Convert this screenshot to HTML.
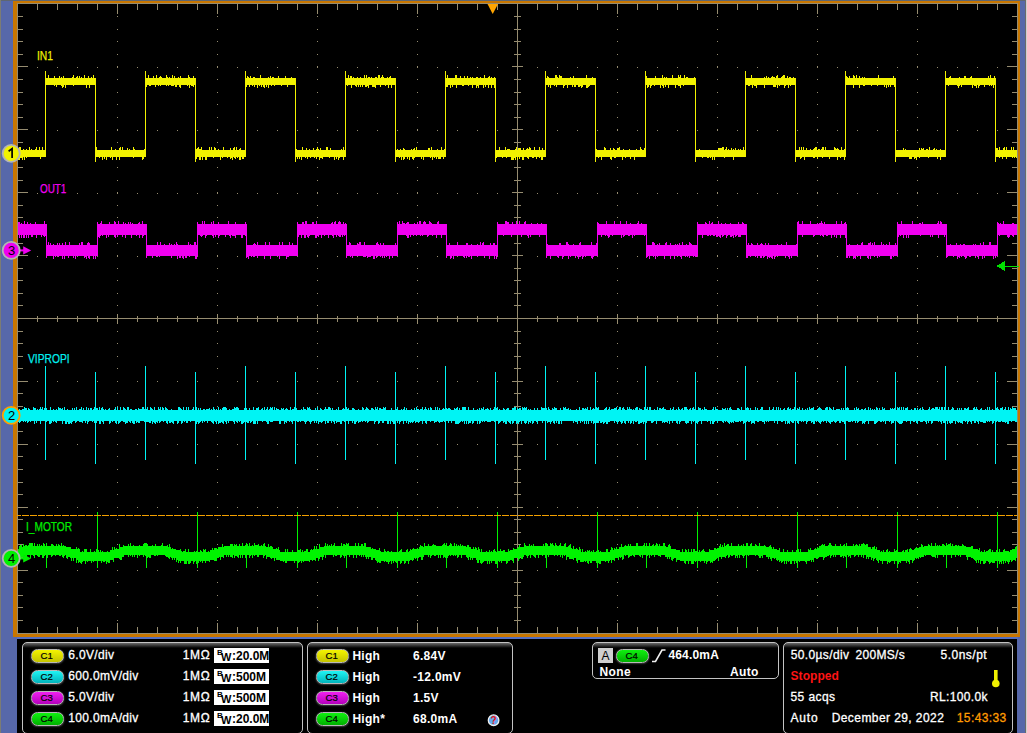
<!DOCTYPE html>
<html><head><meta charset="utf-8"><style>
html,body{margin:0;padding:0;}
body{width:1027px;height:733px;overflow:hidden;position:relative;background:#000;font-family:"Liberation Sans",sans-serif;}
svg{position:absolute;left:0;top:0;}

.lbl{position:absolute;font-size:13px;line-height:13px;transform-origin:0 0;transform:scaleX(0.76);white-space:nowrap;-webkit-text-stroke:0.25px currentColor;}
.t{position:absolute;white-space:nowrap;color:#fff;font-size:12px;line-height:12px;}
.b{font-weight:bold;}
.panel{position:absolute;border:1px solid #c4c4c4;border-radius:5px;box-sizing:border-box;background:linear-gradient(#6a6a6a 0,#2a2a2a 3px,#000 5px,#000);}
.pill{position:absolute;width:31px;height:12px;border-radius:6.5px;border:1px solid #b8b8b8;box-shadow:0 0.5px 1.5px 0.5px #3a3a3a;font-size:9.6px;line-height:11.5px;text-align:center;color:#000;text-indent:-1.5px;-webkit-text-stroke:0.2px #000;}
.bw{position:absolute;background:#fff;color:#000;width:55px;height:15px;font-size:12px;}
.bb{position:absolute;left:3px;top:0px;font-size:8px;line-height:9px;font-weight:bold}
.bwl{position:absolute;left:7px;top:4px;font-size:11px;line-height:11px;font-weight:bold}
.bv{position:absolute;left:18px;top:1px;line-height:14px;font-weight:bold}
svg.i{}
</style></head><body>
<svg width="1027" height="733" viewBox="0 0 1027 733" shape-rendering="crispEdges">
<rect x="0" y="0" width="1027" height="733" fill="#5768aa"/>
<rect x="0" y="0" width="1027" height="1" fill="#5e6672"/>
<rect x="0" y="0" width="1" height="733" fill="#7c7c74"/>
<rect x="1025" y="0" width="1" height="733" fill="#6a6a6a"/><rect x="1026" y="0" width="1" height="733" fill="#d0d0d0"/>
<rect x="13" y="1" width="1007" height="636" fill="#c87600"/>
<rect x="17" y="3" width="1001" height="631" fill="#000"/>
<rect x="17" y="639" width="1000" height="94" fill="#000"/>
<rect x="17" y="637" width="1001" height="2" fill="#5670c0"/>
<path d="M17.5 3V634M1017.5 3V634M17 3.5H1018M17 633.5H1018M37.5 4v6M37.5 633v-6M57.5 4v6M57.5 633v-6M77.5 4v6M77.5 633v-6M97.5 4v6M97.5 633v-6M117.5 4v10M117.5 633v-10M137.5 4v6M137.5 633v-6M157.5 4v6M157.5 633v-6M177.5 4v6M177.5 633v-6M197.5 4v6M197.5 633v-6M217.5 4v10M217.5 633v-10M237.5 4v6M237.5 633v-6M257.5 4v6M257.5 633v-6M277.5 4v6M277.5 633v-6M297.5 4v6M297.5 633v-6M317.5 4v10M317.5 633v-10M337.5 4v6M337.5 633v-6M357.5 4v6M357.5 633v-6M377.5 4v6M377.5 633v-6M397.5 4v6M397.5 633v-6M417.5 4v10M417.5 633v-10M437.5 4v6M437.5 633v-6M457.5 4v6M457.5 633v-6M477.5 4v6M477.5 633v-6M497.5 4v6M497.5 633v-6M517.5 4v10M517.5 633v-10M537.5 4v6M537.5 633v-6M557.5 4v6M557.5 633v-6M577.5 4v6M577.5 633v-6M597.5 4v6M597.5 633v-6M617.5 4v10M617.5 633v-10M637.5 4v6M637.5 633v-6M657.5 4v6M657.5 633v-6M677.5 4v6M677.5 633v-6M697.5 4v6M697.5 633v-6M717.5 4v10M717.5 633v-10M737.5 4v6M737.5 633v-6M757.5 4v6M757.5 633v-6M777.5 4v6M777.5 633v-6M797.5 4v6M797.5 633v-6M817.5 4v10M817.5 633v-10M837.5 4v6M837.5 633v-6M857.5 4v6M857.5 633v-6M877.5 4v6M877.5 633v-6M897.5 4v6M897.5 633v-6M917.5 4v10M917.5 633v-10M937.5 4v6M937.5 633v-6M957.5 4v6M957.5 633v-6M977.5 4v6M977.5 633v-6M997.5 4v6M997.5 633v-6M17 16.5h6M1018 16.5h-6M17 29.5h6M1018 29.5h-6M17 41.5h6M1018 41.5h-6M17 54.5h6M1018 54.5h-6M17 66.5h11M1018 66.5h-11M17 79.5h6M1018 79.5h-6M17 92.5h6M1018 92.5h-6M17 104.5h6M1018 104.5h-6M17 117.5h6M1018 117.5h-6M17 129.5h11M1018 129.5h-11M17 142.5h6M1018 142.5h-6M17 154.5h6M1018 154.5h-6M17 167.5h6M1018 167.5h-6M17 180.5h6M1018 180.5h-6M17 192.5h11M1018 192.5h-11M17 205.5h6M1018 205.5h-6M17 217.5h6M1018 217.5h-6M17 230.5h6M1018 230.5h-6M17 243.5h6M1018 243.5h-6M17 255.5h11M1018 255.5h-11M17 268.5h6M1018 268.5h-6M17 280.5h6M1018 280.5h-6M17 293.5h6M1018 293.5h-6M17 305.5h6M1018 305.5h-6M17 318.5h11M1018 318.5h-11M17 331.5h6M1018 331.5h-6M17 343.5h6M1018 343.5h-6M17 356.5h6M1018 356.5h-6M17 368.5h6M1018 368.5h-6M17 381.5h11M1018 381.5h-11M17 393.5h6M1018 393.5h-6M17 406.5h6M1018 406.5h-6M17 419.5h6M1018 419.5h-6M17 431.5h6M1018 431.5h-6M17 444.5h11M1018 444.5h-11M17 456.5h6M1018 456.5h-6M17 469.5h6M1018 469.5h-6M17 482.5h6M1018 482.5h-6M17 494.5h6M1018 494.5h-6M17 507.5h11M1018 507.5h-11M17 519.5h6M1018 519.5h-6M17 532.5h6M1018 532.5h-6M17 544.5h6M1018 544.5h-6M17 557.5h6M1018 557.5h-6M17 570.5h11M1018 570.5h-11M17 582.5h6M1018 582.5h-6M17 595.5h6M1018 595.5h-6M17 607.5h6M1018 607.5h-6M17 620.5h6M1018 620.5h-6M517.5 4V633M17 318.5H1017M37.5 315.5v6M57.5 315.5v6M77.5 315.5v6M97.5 315.5v6M117.5 313.5v10M137.5 315.5v6M157.5 315.5v6M177.5 315.5v6M197.5 315.5v6M217.5 313.5v10M237.5 315.5v6M257.5 315.5v6M277.5 315.5v6M297.5 315.5v6M317.5 313.5v10M337.5 315.5v6M357.5 315.5v6M377.5 315.5v6M397.5 315.5v6M417.5 313.5v10M437.5 315.5v6M457.5 315.5v6M477.5 315.5v6M497.5 315.5v6M517.5 313.5v10M537.5 315.5v6M557.5 315.5v6M577.5 315.5v6M597.5 315.5v6M617.5 313.5v10M637.5 315.5v6M657.5 315.5v6M677.5 315.5v6M697.5 315.5v6M717.5 313.5v10M737.5 315.5v6M757.5 315.5v6M777.5 315.5v6M797.5 315.5v6M817.5 313.5v10M837.5 315.5v6M857.5 315.5v6M877.5 315.5v6M897.5 315.5v6M917.5 313.5v10M937.5 315.5v6M957.5 315.5v6M977.5 315.5v6M997.5 315.5v6M514 16.5h7M514 29.5h7M514 41.5h7M514 54.5h7M512 66.5h11M514 79.5h7M514 92.5h7M514 104.5h7M514 117.5h7M512 129.5h11M514 142.5h7M514 154.5h7M514 167.5h7M514 180.5h7M512 192.5h11M514 205.5h7M514 217.5h7M514 230.5h7M514 243.5h7M512 255.5h11M514 268.5h7M514 280.5h7M514 293.5h7M514 305.5h7M512 318.5h11M514 331.5h7M514 343.5h7M514 356.5h7M514 368.5h7M512 381.5h11M514 393.5h7M514 406.5h7M514 419.5h7M514 431.5h7M512 444.5h11M514 456.5h7M514 469.5h7M514 482.5h7M514 494.5h7M512 507.5h11M514 519.5h7M514 532.5h7M514 544.5h7M514 557.5h7M512 570.5h11M514 582.5h7M514 595.5h7M514 607.5h7M514 620.5h7" stroke="#968c70" stroke-width="1" fill="none"/>
<path d="M117 16h1v1h-1zM117 29h1v1h-1zM117 41h1v1h-1zM117 54h1v1h-1zM117 66h1v1h-1zM117 79h1v1h-1zM117 92h1v1h-1zM117 104h1v1h-1zM117 117h1v1h-1zM117 129h1v1h-1zM117 142h1v1h-1zM117 154h1v1h-1zM117 167h1v1h-1zM117 180h1v1h-1zM117 192h1v1h-1zM117 205h1v1h-1zM117 217h1v1h-1zM117 230h1v1h-1zM117 243h1v1h-1zM117 255h1v1h-1zM117 268h1v1h-1zM117 280h1v1h-1zM117 293h1v1h-1zM117 305h1v1h-1zM117 318h1v1h-1zM117 331h1v1h-1zM117 343h1v1h-1zM117 356h1v1h-1zM117 368h1v1h-1zM117 381h1v1h-1zM117 393h1v1h-1zM117 406h1v1h-1zM117 419h1v1h-1zM117 431h1v1h-1zM117 444h1v1h-1zM117 456h1v1h-1zM117 469h1v1h-1zM117 482h1v1h-1zM117 494h1v1h-1zM117 507h1v1h-1zM117 519h1v1h-1zM117 532h1v1h-1zM117 544h1v1h-1zM117 557h1v1h-1zM117 570h1v1h-1zM117 582h1v1h-1zM117 595h1v1h-1zM117 607h1v1h-1zM117 620h1v1h-1zM217 16h1v1h-1zM217 29h1v1h-1zM217 41h1v1h-1zM217 54h1v1h-1zM217 66h1v1h-1zM217 79h1v1h-1zM217 92h1v1h-1zM217 104h1v1h-1zM217 117h1v1h-1zM217 129h1v1h-1zM217 142h1v1h-1zM217 154h1v1h-1zM217 167h1v1h-1zM217 180h1v1h-1zM217 192h1v1h-1zM217 205h1v1h-1zM217 217h1v1h-1zM217 230h1v1h-1zM217 243h1v1h-1zM217 255h1v1h-1zM217 268h1v1h-1zM217 280h1v1h-1zM217 293h1v1h-1zM217 305h1v1h-1zM217 318h1v1h-1zM217 331h1v1h-1zM217 343h1v1h-1zM217 356h1v1h-1zM217 368h1v1h-1zM217 381h1v1h-1zM217 393h1v1h-1zM217 406h1v1h-1zM217 419h1v1h-1zM217 431h1v1h-1zM217 444h1v1h-1zM217 456h1v1h-1zM217 469h1v1h-1zM217 482h1v1h-1zM217 494h1v1h-1zM217 507h1v1h-1zM217 519h1v1h-1zM217 532h1v1h-1zM217 544h1v1h-1zM217 557h1v1h-1zM217 570h1v1h-1zM217 582h1v1h-1zM217 595h1v1h-1zM217 607h1v1h-1zM217 620h1v1h-1zM317 16h1v1h-1zM317 29h1v1h-1zM317 41h1v1h-1zM317 54h1v1h-1zM317 66h1v1h-1zM317 79h1v1h-1zM317 92h1v1h-1zM317 104h1v1h-1zM317 117h1v1h-1zM317 129h1v1h-1zM317 142h1v1h-1zM317 154h1v1h-1zM317 167h1v1h-1zM317 180h1v1h-1zM317 192h1v1h-1zM317 205h1v1h-1zM317 217h1v1h-1zM317 230h1v1h-1zM317 243h1v1h-1zM317 255h1v1h-1zM317 268h1v1h-1zM317 280h1v1h-1zM317 293h1v1h-1zM317 305h1v1h-1zM317 318h1v1h-1zM317 331h1v1h-1zM317 343h1v1h-1zM317 356h1v1h-1zM317 368h1v1h-1zM317 381h1v1h-1zM317 393h1v1h-1zM317 406h1v1h-1zM317 419h1v1h-1zM317 431h1v1h-1zM317 444h1v1h-1zM317 456h1v1h-1zM317 469h1v1h-1zM317 482h1v1h-1zM317 494h1v1h-1zM317 507h1v1h-1zM317 519h1v1h-1zM317 532h1v1h-1zM317 544h1v1h-1zM317 557h1v1h-1zM317 570h1v1h-1zM317 582h1v1h-1zM317 595h1v1h-1zM317 607h1v1h-1zM317 620h1v1h-1zM417 16h1v1h-1zM417 29h1v1h-1zM417 41h1v1h-1zM417 54h1v1h-1zM417 66h1v1h-1zM417 79h1v1h-1zM417 92h1v1h-1zM417 104h1v1h-1zM417 117h1v1h-1zM417 129h1v1h-1zM417 142h1v1h-1zM417 154h1v1h-1zM417 167h1v1h-1zM417 180h1v1h-1zM417 192h1v1h-1zM417 205h1v1h-1zM417 217h1v1h-1zM417 230h1v1h-1zM417 243h1v1h-1zM417 255h1v1h-1zM417 268h1v1h-1zM417 280h1v1h-1zM417 293h1v1h-1zM417 305h1v1h-1zM417 318h1v1h-1zM417 331h1v1h-1zM417 343h1v1h-1zM417 356h1v1h-1zM417 368h1v1h-1zM417 381h1v1h-1zM417 393h1v1h-1zM417 406h1v1h-1zM417 419h1v1h-1zM417 431h1v1h-1zM417 444h1v1h-1zM417 456h1v1h-1zM417 469h1v1h-1zM417 482h1v1h-1zM417 494h1v1h-1zM417 507h1v1h-1zM417 519h1v1h-1zM417 532h1v1h-1zM417 544h1v1h-1zM417 557h1v1h-1zM417 570h1v1h-1zM417 582h1v1h-1zM417 595h1v1h-1zM417 607h1v1h-1zM417 620h1v1h-1zM617 16h1v1h-1zM617 29h1v1h-1zM617 41h1v1h-1zM617 54h1v1h-1zM617 66h1v1h-1zM617 79h1v1h-1zM617 92h1v1h-1zM617 104h1v1h-1zM617 117h1v1h-1zM617 129h1v1h-1zM617 142h1v1h-1zM617 154h1v1h-1zM617 167h1v1h-1zM617 180h1v1h-1zM617 192h1v1h-1zM617 205h1v1h-1zM617 217h1v1h-1zM617 230h1v1h-1zM617 243h1v1h-1zM617 255h1v1h-1zM617 268h1v1h-1zM617 280h1v1h-1zM617 293h1v1h-1zM617 305h1v1h-1zM617 318h1v1h-1zM617 331h1v1h-1zM617 343h1v1h-1zM617 356h1v1h-1zM617 368h1v1h-1zM617 381h1v1h-1zM617 393h1v1h-1zM617 406h1v1h-1zM617 419h1v1h-1zM617 431h1v1h-1zM617 444h1v1h-1zM617 456h1v1h-1zM617 469h1v1h-1zM617 482h1v1h-1zM617 494h1v1h-1zM617 507h1v1h-1zM617 519h1v1h-1zM617 532h1v1h-1zM617 544h1v1h-1zM617 557h1v1h-1zM617 570h1v1h-1zM617 582h1v1h-1zM617 595h1v1h-1zM617 607h1v1h-1zM617 620h1v1h-1zM717 16h1v1h-1zM717 29h1v1h-1zM717 41h1v1h-1zM717 54h1v1h-1zM717 66h1v1h-1zM717 79h1v1h-1zM717 92h1v1h-1zM717 104h1v1h-1zM717 117h1v1h-1zM717 129h1v1h-1zM717 142h1v1h-1zM717 154h1v1h-1zM717 167h1v1h-1zM717 180h1v1h-1zM717 192h1v1h-1zM717 205h1v1h-1zM717 217h1v1h-1zM717 230h1v1h-1zM717 243h1v1h-1zM717 255h1v1h-1zM717 268h1v1h-1zM717 280h1v1h-1zM717 293h1v1h-1zM717 305h1v1h-1zM717 318h1v1h-1zM717 331h1v1h-1zM717 343h1v1h-1zM717 356h1v1h-1zM717 368h1v1h-1zM717 381h1v1h-1zM717 393h1v1h-1zM717 406h1v1h-1zM717 419h1v1h-1zM717 431h1v1h-1zM717 444h1v1h-1zM717 456h1v1h-1zM717 469h1v1h-1zM717 482h1v1h-1zM717 494h1v1h-1zM717 507h1v1h-1zM717 519h1v1h-1zM717 532h1v1h-1zM717 544h1v1h-1zM717 557h1v1h-1zM717 570h1v1h-1zM717 582h1v1h-1zM717 595h1v1h-1zM717 607h1v1h-1zM717 620h1v1h-1zM817 16h1v1h-1zM817 29h1v1h-1zM817 41h1v1h-1zM817 54h1v1h-1zM817 66h1v1h-1zM817 79h1v1h-1zM817 92h1v1h-1zM817 104h1v1h-1zM817 117h1v1h-1zM817 129h1v1h-1zM817 142h1v1h-1zM817 154h1v1h-1zM817 167h1v1h-1zM817 180h1v1h-1zM817 192h1v1h-1zM817 205h1v1h-1zM817 217h1v1h-1zM817 230h1v1h-1zM817 243h1v1h-1zM817 255h1v1h-1zM817 268h1v1h-1zM817 280h1v1h-1zM817 293h1v1h-1zM817 305h1v1h-1zM817 318h1v1h-1zM817 331h1v1h-1zM817 343h1v1h-1zM817 356h1v1h-1zM817 368h1v1h-1zM817 381h1v1h-1zM817 393h1v1h-1zM817 406h1v1h-1zM817 419h1v1h-1zM817 431h1v1h-1zM817 444h1v1h-1zM817 456h1v1h-1zM817 469h1v1h-1zM817 482h1v1h-1zM817 494h1v1h-1zM817 507h1v1h-1zM817 519h1v1h-1zM817 532h1v1h-1zM817 544h1v1h-1zM817 557h1v1h-1zM817 570h1v1h-1zM817 582h1v1h-1zM817 595h1v1h-1zM817 607h1v1h-1zM817 620h1v1h-1zM917 16h1v1h-1zM917 29h1v1h-1zM917 41h1v1h-1zM917 54h1v1h-1zM917 66h1v1h-1zM917 79h1v1h-1zM917 92h1v1h-1zM917 104h1v1h-1zM917 117h1v1h-1zM917 129h1v1h-1zM917 142h1v1h-1zM917 154h1v1h-1zM917 167h1v1h-1zM917 180h1v1h-1zM917 192h1v1h-1zM917 205h1v1h-1zM917 217h1v1h-1zM917 230h1v1h-1zM917 243h1v1h-1zM917 255h1v1h-1zM917 268h1v1h-1zM917 280h1v1h-1zM917 293h1v1h-1zM917 305h1v1h-1zM917 318h1v1h-1zM917 331h1v1h-1zM917 343h1v1h-1zM917 356h1v1h-1zM917 368h1v1h-1zM917 381h1v1h-1zM917 393h1v1h-1zM917 406h1v1h-1zM917 419h1v1h-1zM917 431h1v1h-1zM917 444h1v1h-1zM917 456h1v1h-1zM917 469h1v1h-1zM917 482h1v1h-1zM917 494h1v1h-1zM917 507h1v1h-1zM917 519h1v1h-1zM917 532h1v1h-1zM917 544h1v1h-1zM917 557h1v1h-1zM917 570h1v1h-1zM917 582h1v1h-1zM917 595h1v1h-1zM917 607h1v1h-1zM917 620h1v1h-1zM37 67h1v1h-1zM57 67h1v1h-1zM77 67h1v1h-1zM97 67h1v1h-1zM117 67h1v1h-1zM137 67h1v1h-1zM157 67h1v1h-1zM177 67h1v1h-1zM197 67h1v1h-1zM217 67h1v1h-1zM237 67h1v1h-1zM257 67h1v1h-1zM277 67h1v1h-1zM297 67h1v1h-1zM317 67h1v1h-1zM337 67h1v1h-1zM357 67h1v1h-1zM377 67h1v1h-1zM397 67h1v1h-1zM417 67h1v1h-1zM437 67h1v1h-1zM457 67h1v1h-1zM477 67h1v1h-1zM497 67h1v1h-1zM517 67h1v1h-1zM537 67h1v1h-1zM557 67h1v1h-1zM577 67h1v1h-1zM597 67h1v1h-1zM617 67h1v1h-1zM637 67h1v1h-1zM657 67h1v1h-1zM677 67h1v1h-1zM697 67h1v1h-1zM717 67h1v1h-1zM737 67h1v1h-1zM757 67h1v1h-1zM777 67h1v1h-1zM797 67h1v1h-1zM817 67h1v1h-1zM837 67h1v1h-1zM857 67h1v1h-1zM877 67h1v1h-1zM897 67h1v1h-1zM917 67h1v1h-1zM937 67h1v1h-1zM957 67h1v1h-1zM977 67h1v1h-1zM997 67h1v1h-1zM37 130h1v1h-1zM57 130h1v1h-1zM77 130h1v1h-1zM97 130h1v1h-1zM117 130h1v1h-1zM137 130h1v1h-1zM157 130h1v1h-1zM177 130h1v1h-1zM197 130h1v1h-1zM217 130h1v1h-1zM237 130h1v1h-1zM257 130h1v1h-1zM277 130h1v1h-1zM297 130h1v1h-1zM317 130h1v1h-1zM337 130h1v1h-1zM357 130h1v1h-1zM377 130h1v1h-1zM397 130h1v1h-1zM417 130h1v1h-1zM437 130h1v1h-1zM457 130h1v1h-1zM477 130h1v1h-1zM497 130h1v1h-1zM517 130h1v1h-1zM537 130h1v1h-1zM557 130h1v1h-1zM577 130h1v1h-1zM597 130h1v1h-1zM617 130h1v1h-1zM637 130h1v1h-1zM657 130h1v1h-1zM677 130h1v1h-1zM697 130h1v1h-1zM717 130h1v1h-1zM737 130h1v1h-1zM757 130h1v1h-1zM777 130h1v1h-1zM797 130h1v1h-1zM817 130h1v1h-1zM837 130h1v1h-1zM857 130h1v1h-1zM877 130h1v1h-1zM897 130h1v1h-1zM917 130h1v1h-1zM937 130h1v1h-1zM957 130h1v1h-1zM977 130h1v1h-1zM997 130h1v1h-1zM37 193h1v1h-1zM57 193h1v1h-1zM77 193h1v1h-1zM97 193h1v1h-1zM117 193h1v1h-1zM137 193h1v1h-1zM157 193h1v1h-1zM177 193h1v1h-1zM197 193h1v1h-1zM217 193h1v1h-1zM237 193h1v1h-1zM257 193h1v1h-1zM277 193h1v1h-1zM297 193h1v1h-1zM317 193h1v1h-1zM337 193h1v1h-1zM357 193h1v1h-1zM377 193h1v1h-1zM397 193h1v1h-1zM417 193h1v1h-1zM437 193h1v1h-1zM457 193h1v1h-1zM477 193h1v1h-1zM497 193h1v1h-1zM517 193h1v1h-1zM537 193h1v1h-1zM557 193h1v1h-1zM577 193h1v1h-1zM597 193h1v1h-1zM617 193h1v1h-1zM637 193h1v1h-1zM657 193h1v1h-1zM677 193h1v1h-1zM697 193h1v1h-1zM717 193h1v1h-1zM737 193h1v1h-1zM757 193h1v1h-1zM777 193h1v1h-1zM797 193h1v1h-1zM817 193h1v1h-1zM837 193h1v1h-1zM857 193h1v1h-1zM877 193h1v1h-1zM897 193h1v1h-1zM917 193h1v1h-1zM937 193h1v1h-1zM957 193h1v1h-1zM977 193h1v1h-1zM997 193h1v1h-1zM37 256h1v1h-1zM57 256h1v1h-1zM77 256h1v1h-1zM97 256h1v1h-1zM117 256h1v1h-1zM137 256h1v1h-1zM157 256h1v1h-1zM177 256h1v1h-1zM197 256h1v1h-1zM217 256h1v1h-1zM237 256h1v1h-1zM257 256h1v1h-1zM277 256h1v1h-1zM297 256h1v1h-1zM317 256h1v1h-1zM337 256h1v1h-1zM357 256h1v1h-1zM377 256h1v1h-1zM397 256h1v1h-1zM417 256h1v1h-1zM437 256h1v1h-1zM457 256h1v1h-1zM477 256h1v1h-1zM497 256h1v1h-1zM517 256h1v1h-1zM537 256h1v1h-1zM557 256h1v1h-1zM577 256h1v1h-1zM597 256h1v1h-1zM617 256h1v1h-1zM637 256h1v1h-1zM657 256h1v1h-1zM677 256h1v1h-1zM697 256h1v1h-1zM717 256h1v1h-1zM737 256h1v1h-1zM757 256h1v1h-1zM777 256h1v1h-1zM797 256h1v1h-1zM817 256h1v1h-1zM837 256h1v1h-1zM857 256h1v1h-1zM877 256h1v1h-1zM897 256h1v1h-1zM917 256h1v1h-1zM937 256h1v1h-1zM957 256h1v1h-1zM977 256h1v1h-1zM997 256h1v1h-1zM37 381h1v1h-1zM57 381h1v1h-1zM77 381h1v1h-1zM97 381h1v1h-1zM117 381h1v1h-1zM137 381h1v1h-1zM157 381h1v1h-1zM177 381h1v1h-1zM197 381h1v1h-1zM217 381h1v1h-1zM237 381h1v1h-1zM257 381h1v1h-1zM277 381h1v1h-1zM297 381h1v1h-1zM317 381h1v1h-1zM337 381h1v1h-1zM357 381h1v1h-1zM377 381h1v1h-1zM397 381h1v1h-1zM417 381h1v1h-1zM437 381h1v1h-1zM457 381h1v1h-1zM477 381h1v1h-1zM497 381h1v1h-1zM517 381h1v1h-1zM537 381h1v1h-1zM557 381h1v1h-1zM577 381h1v1h-1zM597 381h1v1h-1zM617 381h1v1h-1zM637 381h1v1h-1zM657 381h1v1h-1zM677 381h1v1h-1zM697 381h1v1h-1zM717 381h1v1h-1zM737 381h1v1h-1zM757 381h1v1h-1zM777 381h1v1h-1zM797 381h1v1h-1zM817 381h1v1h-1zM837 381h1v1h-1zM857 381h1v1h-1zM877 381h1v1h-1zM897 381h1v1h-1zM917 381h1v1h-1zM937 381h1v1h-1zM957 381h1v1h-1zM977 381h1v1h-1zM997 381h1v1h-1zM37 444h1v1h-1zM57 444h1v1h-1zM77 444h1v1h-1zM97 444h1v1h-1zM117 444h1v1h-1zM137 444h1v1h-1zM157 444h1v1h-1zM177 444h1v1h-1zM197 444h1v1h-1zM217 444h1v1h-1zM237 444h1v1h-1zM257 444h1v1h-1zM277 444h1v1h-1zM297 444h1v1h-1zM317 444h1v1h-1zM337 444h1v1h-1zM357 444h1v1h-1zM377 444h1v1h-1zM397 444h1v1h-1zM417 444h1v1h-1zM437 444h1v1h-1zM457 444h1v1h-1zM477 444h1v1h-1zM497 444h1v1h-1zM517 444h1v1h-1zM537 444h1v1h-1zM557 444h1v1h-1zM577 444h1v1h-1zM597 444h1v1h-1zM617 444h1v1h-1zM637 444h1v1h-1zM657 444h1v1h-1zM677 444h1v1h-1zM697 444h1v1h-1zM717 444h1v1h-1zM737 444h1v1h-1zM757 444h1v1h-1zM777 444h1v1h-1zM797 444h1v1h-1zM817 444h1v1h-1zM837 444h1v1h-1zM857 444h1v1h-1zM877 444h1v1h-1zM897 444h1v1h-1zM917 444h1v1h-1zM937 444h1v1h-1zM957 444h1v1h-1zM977 444h1v1h-1zM997 444h1v1h-1zM37 507h1v1h-1zM57 507h1v1h-1zM77 507h1v1h-1zM97 507h1v1h-1zM117 507h1v1h-1zM137 507h1v1h-1zM157 507h1v1h-1zM177 507h1v1h-1zM197 507h1v1h-1zM217 507h1v1h-1zM237 507h1v1h-1zM257 507h1v1h-1zM277 507h1v1h-1zM297 507h1v1h-1zM317 507h1v1h-1zM337 507h1v1h-1zM357 507h1v1h-1zM377 507h1v1h-1zM397 507h1v1h-1zM417 507h1v1h-1zM437 507h1v1h-1zM457 507h1v1h-1zM477 507h1v1h-1zM497 507h1v1h-1zM517 507h1v1h-1zM537 507h1v1h-1zM557 507h1v1h-1zM577 507h1v1h-1zM597 507h1v1h-1zM617 507h1v1h-1zM637 507h1v1h-1zM657 507h1v1h-1zM677 507h1v1h-1zM697 507h1v1h-1zM717 507h1v1h-1zM737 507h1v1h-1zM757 507h1v1h-1zM777 507h1v1h-1zM797 507h1v1h-1zM817 507h1v1h-1zM837 507h1v1h-1zM857 507h1v1h-1zM877 507h1v1h-1zM897 507h1v1h-1zM917 507h1v1h-1zM937 507h1v1h-1zM957 507h1v1h-1zM977 507h1v1h-1zM997 507h1v1h-1zM37 570h1v1h-1zM57 570h1v1h-1zM77 570h1v1h-1zM97 570h1v1h-1zM117 570h1v1h-1zM137 570h1v1h-1zM157 570h1v1h-1zM177 570h1v1h-1zM197 570h1v1h-1zM217 570h1v1h-1zM237 570h1v1h-1zM257 570h1v1h-1zM277 570h1v1h-1zM297 570h1v1h-1zM317 570h1v1h-1zM337 570h1v1h-1zM357 570h1v1h-1zM377 570h1v1h-1zM397 570h1v1h-1zM417 570h1v1h-1zM437 570h1v1h-1zM457 570h1v1h-1zM477 570h1v1h-1zM497 570h1v1h-1zM517 570h1v1h-1zM537 570h1v1h-1zM557 570h1v1h-1zM577 570h1v1h-1zM597 570h1v1h-1zM617 570h1v1h-1zM637 570h1v1h-1zM657 570h1v1h-1zM677 570h1v1h-1zM697 570h1v1h-1zM717 570h1v1h-1zM737 570h1v1h-1zM757 570h1v1h-1zM777 570h1v1h-1zM797 570h1v1h-1zM817 570h1v1h-1zM837 570h1v1h-1zM857 570h1v1h-1zM877 570h1v1h-1zM897 570h1v1h-1zM917 570h1v1h-1zM937 570h1v1h-1zM957 570h1v1h-1zM977 570h1v1h-1zM997 570h1v1h-1z" fill="#968c70"/>
<path d="M18.5 150V160M19.5 147V160M20.5 147V158M21.5 150V158M22.5 150V160M23.5 149V157M24.5 150V160M25.5 150V157M26.5 149V158M27.5 150V157M28.5 150V157M29.5 147V157M30.5 150V157M31.5 149V157M32.5 150V157M33.5 150V157M34.5 150V157M35.5 149V157M36.5 147V157M37.5 150V157M38.5 150V157M39.5 147V157M40.5 150V159M41.5 150V157M42.5 147V157M43.5 150V157M44.5 150V157M45.5 78V85M46.5 78V85M47.5 78V85M48.5 75V85M49.5 78V85M50.5 78V85M51.5 78V85M52.5 78V85M53.5 78V85M54.5 76V86M55.5 78V85M56.5 78V87M57.5 78V85M58.5 78V85M59.5 76V85M60.5 78V85M61.5 77V86M62.5 78V88M63.5 76V87M64.5 78V85M65.5 78V88M66.5 78V85M67.5 78V85M68.5 78V85M69.5 78V85M70.5 78V85M71.5 78V85M72.5 77V85M73.5 75V86M74.5 78V85M75.5 78V85M76.5 77V85M77.5 76V85M78.5 78V85M79.5 76V85M80.5 78V85M81.5 77V85M82.5 78V85M83.5 78V85M84.5 75V85M85.5 78V85M86.5 78V88M87.5 78V85M88.5 76V85M89.5 78V88M90.5 78V85M91.5 77V85M92.5 78V85M93.5 75V85M94.5 78V85M95.5 150V157M96.5 147V157M97.5 150V157M98.5 150V157M99.5 150V158M100.5 150V157M101.5 150V157M102.5 150V160M103.5 150V157M104.5 150V159M105.5 150V157M106.5 150V160M107.5 150V157M108.5 150V157M109.5 150V157M110.5 150V158M111.5 147V157M112.5 150V160M113.5 150V157M114.5 150V157M115.5 149V157M116.5 150V160M117.5 150V157M118.5 150V157M119.5 148V160M120.5 147V157M121.5 150V157M122.5 147V157M123.5 150V157M124.5 150V157M125.5 150V157M126.5 150V157M127.5 148V157M128.5 150V157M129.5 149V157M130.5 150V157M131.5 150V157M132.5 150V157M133.5 147V158M134.5 149V157M135.5 150V157M136.5 150V157M137.5 150V157M138.5 150V157M139.5 150V157M140.5 150V157M141.5 150V157M142.5 150V160M143.5 150V159M144.5 149V157M145.5 78V85M146.5 78V87M147.5 78V85M148.5 75V85M149.5 78V86M150.5 78V86M151.5 78V85M152.5 78V85M153.5 76V85M154.5 78V85M155.5 78V87M156.5 75V85M157.5 78V85M158.5 78V86M159.5 77V85M160.5 76V86M161.5 77V85M162.5 78V85M163.5 78V85M164.5 78V85M165.5 78V85M166.5 75V86M167.5 77V85M168.5 78V86M169.5 77V85M170.5 78V85M171.5 78V86M172.5 75V86M173.5 78V86M174.5 76V85M175.5 78V87M176.5 78V87M177.5 78V85M178.5 77V85M179.5 78V87M180.5 76V88M181.5 78V85M182.5 78V85M183.5 78V85M184.5 78V85M185.5 78V85M186.5 78V85M187.5 78V86M188.5 75V85M189.5 77V88M190.5 78V85M191.5 78V86M192.5 78V86M193.5 76V87M194.5 78V85M195.5 150V159M196.5 149V159M197.5 148V157M198.5 147V157M199.5 149V160M200.5 149V160M201.5 147V157M202.5 150V160M203.5 150V157M204.5 150V157M205.5 150V160M206.5 150V160M207.5 150V157M208.5 150V157M209.5 147V157M210.5 150V157M211.5 147V157M212.5 150V157M213.5 150V158M214.5 147V157M215.5 148V157M216.5 150V157M217.5 150V157M218.5 149V157M219.5 150V157M220.5 150V160M221.5 150V157M222.5 150V158M223.5 147V157M224.5 150V157M225.5 150V157M226.5 150V157M227.5 150V158M228.5 150V157M229.5 150V157M230.5 148V159M231.5 150V158M232.5 150V160M233.5 148V157M234.5 147V158M235.5 150V159M236.5 147V157M237.5 150V158M238.5 150V157M239.5 149V160M240.5 148V160M241.5 150V157M242.5 150V159M243.5 150V159M244.5 150V157M245.5 78V85M246.5 78V87M247.5 76V85M248.5 77V85M249.5 78V87M250.5 76V85M251.5 78V85M252.5 78V86M253.5 77V85M254.5 77V87M255.5 78V85M256.5 78V85M257.5 78V88M258.5 78V85M259.5 78V86M260.5 75V85M261.5 78V87M262.5 78V85M263.5 78V87M264.5 78V88M265.5 78V85M266.5 78V87M267.5 78V85M268.5 77V88M269.5 78V85M270.5 76V85M271.5 78V86M272.5 77V85M273.5 77V85M274.5 78V86M275.5 78V85M276.5 78V85M277.5 78V85M278.5 76V85M279.5 78V85M280.5 78V85M281.5 78V86M282.5 78V85M283.5 78V85M284.5 78V85M285.5 76V85M286.5 78V85M287.5 78V87M288.5 78V85M289.5 78V85M290.5 78V85M291.5 77V85M292.5 78V85M293.5 78V85M294.5 78V85M295.5 150V158M296.5 149V157M297.5 150V159M298.5 150V157M299.5 150V159M300.5 150V157M301.5 150V160M302.5 147V157M303.5 150V157M304.5 150V157M305.5 150V158M306.5 148V157M307.5 150V159M308.5 150V157M309.5 149V157M310.5 150V158M311.5 150V157M312.5 150V157M313.5 148V157M314.5 150V158M315.5 150V157M316.5 149V159M317.5 147V157M318.5 149V157M319.5 150V160M320.5 148V158M321.5 150V158M322.5 150V159M323.5 150V157M324.5 150V157M325.5 150V157M326.5 147V157M327.5 147V157M328.5 150V157M329.5 150V158M330.5 148V157M331.5 150V157M332.5 150V157M333.5 150V157M334.5 150V160M335.5 150V157M336.5 150V159M337.5 150V157M338.5 150V160M339.5 150V158M340.5 150V157M341.5 149V157M342.5 150V157M343.5 147V160M344.5 150V157M345.5 77V85M346.5 78V85M347.5 78V86M348.5 75V85M349.5 78V85M350.5 76V85M351.5 76V88M352.5 78V85M353.5 77V85M354.5 78V85M355.5 78V86M356.5 78V87M357.5 77V85M358.5 78V87M359.5 78V85M360.5 77V87M361.5 78V85M362.5 78V87M363.5 78V85M364.5 75V85M365.5 78V87M366.5 75V87M367.5 78V86M368.5 77V88M369.5 77V85M370.5 78V85M371.5 77V85M372.5 78V87M373.5 78V87M374.5 78V87M375.5 77V88M376.5 77V85M377.5 78V85M378.5 75V85M379.5 75V85M380.5 78V87M381.5 77V85M382.5 75V85M383.5 77V85M384.5 78V85M385.5 78V86M386.5 78V85M387.5 77V85M388.5 78V88M389.5 77V85M390.5 76V85M391.5 78V88M392.5 78V85M393.5 78V85M394.5 78V85M395.5 147V157M396.5 150V157M397.5 149V157M398.5 150V157M399.5 150V158M400.5 149V157M401.5 150V160M402.5 150V157M403.5 148V160M404.5 149V159M405.5 150V157M406.5 150V157M407.5 150V159M408.5 150V157M409.5 150V160M410.5 150V157M411.5 149V157M412.5 150V159M413.5 149V160M414.5 148V158M415.5 150V157M416.5 147V157M417.5 150V157M418.5 150V157M419.5 150V157M420.5 150V157M421.5 150V159M422.5 150V157M423.5 150V160M424.5 150V157M425.5 150V157M426.5 150V157M427.5 150V157M428.5 148V157M429.5 148V157M430.5 150V158M431.5 147V157M432.5 150V160M433.5 150V157M434.5 150V158M435.5 150V157M436.5 150V159M437.5 149V157M438.5 150V159M439.5 150V159M440.5 150V159M441.5 147V157M442.5 150V157M443.5 150V159M444.5 149V157M445.5 78V87M446.5 78V87M447.5 75V87M448.5 78V85M449.5 78V85M450.5 78V88M451.5 78V85M452.5 78V87M453.5 78V85M454.5 78V85M455.5 75V85M456.5 75V88M457.5 78V85M458.5 78V85M459.5 78V85M460.5 76V85M461.5 78V85M462.5 78V86M463.5 78V86M464.5 76V85M465.5 78V85M466.5 78V85M467.5 76V85M468.5 78V86M469.5 78V85M470.5 77V85M471.5 78V85M472.5 77V88M473.5 78V85M474.5 78V85M475.5 78V85M476.5 77V88M477.5 77V86M478.5 78V88M479.5 78V85M480.5 77V85M481.5 78V85M482.5 78V85M483.5 78V88M484.5 75V85M485.5 78V87M486.5 78V85M487.5 78V85M488.5 77V88M489.5 76V85M490.5 78V85M491.5 77V88M492.5 78V85M493.5 78V85M494.5 77V88M495.5 148V157M496.5 150V158M497.5 150V157M498.5 150V157M499.5 147V157M500.5 150V157M501.5 150V157M502.5 150V158M503.5 150V157M504.5 150V157M505.5 147V157M506.5 150V158M507.5 149V157M508.5 149V157M509.5 149V157M510.5 150V157M511.5 150V160M512.5 150V160M513.5 150V160M514.5 150V158M515.5 149V160M516.5 147V157M517.5 150V160M518.5 148V157M519.5 148V159M520.5 148V157M521.5 150V157M522.5 150V160M523.5 148V160M524.5 150V157M525.5 150V157M526.5 149V157M527.5 148V158M528.5 149V159M529.5 147V157M530.5 148V157M531.5 150V157M532.5 150V158M533.5 150V158M534.5 147V157M535.5 150V157M536.5 150V159M537.5 150V157M538.5 150V157M539.5 147V158M540.5 150V157M541.5 150V160M542.5 148V160M543.5 150V157M544.5 150V157M545.5 78V87M546.5 78V85M547.5 76V85M548.5 77V87M549.5 78V85M550.5 78V88M551.5 78V85M552.5 78V85M553.5 78V85M554.5 78V86M555.5 75V85M556.5 75V87M557.5 77V85M558.5 78V85M559.5 75V85M560.5 76V85M561.5 76V85M562.5 78V85M563.5 78V88M564.5 78V86M565.5 78V85M566.5 78V85M567.5 78V88M568.5 78V85M569.5 78V85M570.5 77V85M571.5 78V85M572.5 78V87M573.5 76V85M574.5 78V87M575.5 78V87M576.5 78V85M577.5 78V85M578.5 78V87M579.5 78V87M580.5 78V86M581.5 78V88M582.5 78V87M583.5 78V85M584.5 78V85M585.5 78V85M586.5 75V88M587.5 78V88M588.5 78V87M589.5 78V86M590.5 78V85M591.5 78V85M592.5 77V85M593.5 78V85M594.5 78V85M595.5 150V157M596.5 149V157M597.5 150V157M598.5 150V158M599.5 150V157M600.5 150V157M601.5 150V160M602.5 150V157M603.5 150V157M604.5 147V157M605.5 148V157M606.5 150V157M607.5 150V157M608.5 150V157M609.5 150V157M610.5 148V159M611.5 150V160M612.5 150V157M613.5 148V157M614.5 149V158M615.5 150V158M616.5 150V157M617.5 148V157M618.5 148V157M619.5 147V157M620.5 150V157M621.5 150V157M622.5 150V160M623.5 149V157M624.5 150V157M625.5 150V158M626.5 150V157M627.5 150V157M628.5 150V157M629.5 149V157M630.5 150V159M631.5 150V157M632.5 150V157M633.5 150V157M634.5 150V160M635.5 150V157M636.5 149V157M637.5 150V157M638.5 150V157M639.5 150V157M640.5 147V157M641.5 149V157M642.5 150V157M643.5 150V157M644.5 148V157M645.5 77V85M646.5 76V85M647.5 78V88M648.5 78V87M649.5 78V85M650.5 78V88M651.5 78V86M652.5 78V85M653.5 78V85M654.5 78V86M655.5 76V85M656.5 78V85M657.5 78V85M658.5 78V85M659.5 78V85M660.5 78V88M661.5 78V85M662.5 75V86M663.5 78V88M664.5 77V85M665.5 78V87M666.5 77V85M667.5 78V85M668.5 78V88M669.5 78V85M670.5 78V85M671.5 78V85M672.5 75V85M673.5 78V85M674.5 78V85M675.5 78V88M676.5 78V85M677.5 78V85M678.5 75V86M679.5 77V86M680.5 75V88M681.5 78V85M682.5 78V85M683.5 78V86M684.5 75V85M685.5 78V85M686.5 77V85M687.5 77V85M688.5 78V85M689.5 78V85M690.5 78V85M691.5 78V85M692.5 78V85M693.5 78V85M694.5 77V85M695.5 150V157M696.5 150V157M697.5 150V157M698.5 150V157M699.5 149V157M700.5 150V157M701.5 150V157M702.5 150V158M703.5 150V157M704.5 150V157M705.5 150V157M706.5 150V157M707.5 150V158M708.5 150V158M709.5 150V157M710.5 150V158M711.5 150V157M712.5 150V160M713.5 150V157M714.5 150V160M715.5 150V157M716.5 150V157M717.5 150V157M718.5 148V157M719.5 148V157M720.5 148V157M721.5 148V157M722.5 147V157M723.5 147V157M724.5 150V158M725.5 149V157M726.5 147V157M727.5 150V157M728.5 149V157M729.5 150V157M730.5 150V157M731.5 148V157M732.5 150V157M733.5 149V160M734.5 150V157M735.5 148V157M736.5 150V157M737.5 150V157M738.5 149V157M739.5 150V157M740.5 149V157M741.5 150V157M742.5 150V157M743.5 147V157M744.5 150V157M745.5 76V85M746.5 78V85M747.5 78V85M748.5 78V86M749.5 78V86M750.5 78V85M751.5 75V85M752.5 78V88M753.5 78V85M754.5 78V86M755.5 78V86M756.5 78V88M757.5 78V85M758.5 78V85M759.5 78V85M760.5 78V85M761.5 78V85M762.5 78V85M763.5 78V85M764.5 77V88M765.5 78V85M766.5 76V85M767.5 78V85M768.5 77V85M769.5 78V85M770.5 78V85M771.5 77V85M772.5 76V85M773.5 77V87M774.5 77V87M775.5 78V87M776.5 76V85M777.5 75V88M778.5 78V85M779.5 78V86M780.5 78V85M781.5 77V85M782.5 76V85M783.5 75V85M784.5 75V88M785.5 78V86M786.5 78V85M787.5 76V85M788.5 78V88M789.5 77V85M790.5 77V86M791.5 78V85M792.5 78V85M793.5 77V85M794.5 78V85M795.5 150V158M796.5 150V157M797.5 150V157M798.5 150V157M799.5 147V157M800.5 150V159M801.5 147V158M802.5 150V157M803.5 147V157M804.5 150V160M805.5 150V157M806.5 148V157M807.5 150V157M808.5 150V157M809.5 150V157M810.5 149V157M811.5 150V157M812.5 150V157M813.5 149V158M814.5 148V158M815.5 147V157M816.5 147V157M817.5 150V159M818.5 149V157M819.5 149V157M820.5 150V157M821.5 149V157M822.5 147V158M823.5 147V157M824.5 150V157M825.5 147V157M826.5 150V157M827.5 150V157M828.5 150V157M829.5 150V159M830.5 150V157M831.5 150V157M832.5 150V157M833.5 150V157M834.5 147V157M835.5 148V157M836.5 149V157M837.5 148V160M838.5 149V157M839.5 150V157M840.5 150V158M841.5 147V157M842.5 150V157M843.5 150V157M844.5 149V160M845.5 77V85M846.5 76V85M847.5 77V85M848.5 78V85M849.5 76V85M850.5 78V85M851.5 78V85M852.5 78V85M853.5 75V88M854.5 76V85M855.5 78V85M856.5 75V85M857.5 78V85M858.5 78V85M859.5 76V88M860.5 78V85M861.5 78V85M862.5 77V85M863.5 78V86M864.5 77V86M865.5 78V85M866.5 78V85M867.5 78V85M868.5 78V85M869.5 78V85M870.5 78V85M871.5 78V86M872.5 78V85M873.5 78V85M874.5 78V85M875.5 78V85M876.5 78V85M877.5 78V86M878.5 75V85M879.5 78V85M880.5 78V85M881.5 78V85M882.5 78V85M883.5 78V85M884.5 78V87M885.5 78V85M886.5 78V88M887.5 78V85M888.5 78V87M889.5 78V85M890.5 78V87M891.5 78V85M892.5 78V85M893.5 76V85M894.5 78V87M895.5 150V157M896.5 150V157M897.5 150V157M898.5 150V157M899.5 150V157M900.5 150V157M901.5 150V157M902.5 150V157M903.5 148V157M904.5 150V157M905.5 149V157M906.5 150V157M907.5 150V157M908.5 150V157M909.5 150V159M910.5 150V159M911.5 150V159M912.5 150V157M913.5 150V157M914.5 150V159M915.5 150V158M916.5 150V160M917.5 150V157M918.5 150V157M919.5 148V158M920.5 150V157M921.5 148V157M922.5 149V157M923.5 148V157M924.5 150V157M925.5 150V157M926.5 149V157M927.5 149V157M928.5 150V158M929.5 147V157M930.5 150V157M931.5 150V157M932.5 150V157M933.5 149V157M934.5 148V157M935.5 150V157M936.5 149V157M937.5 150V159M938.5 150V157M939.5 150V157M940.5 149V160M941.5 150V157M942.5 150V157M943.5 150V157M944.5 150V157M945.5 78V87M946.5 78V85M947.5 78V85M948.5 78V86M949.5 77V85M950.5 76V85M951.5 78V85M952.5 78V85M953.5 78V85M954.5 78V85M955.5 78V85M956.5 78V85M957.5 78V86M958.5 78V88M959.5 77V86M960.5 78V85M961.5 78V87M962.5 78V85M963.5 78V85M964.5 76V85M965.5 76V85M966.5 78V85M967.5 78V85M968.5 78V85M969.5 78V85M970.5 77V85M971.5 76V85M972.5 78V88M973.5 78V85M974.5 78V86M975.5 78V86M976.5 78V88M977.5 78V85M978.5 78V88M979.5 78V86M980.5 78V85M981.5 78V85M982.5 78V85M983.5 78V85M984.5 78V87M985.5 78V85M986.5 78V85M987.5 78V85M988.5 76V85M989.5 78V86M990.5 75V85M991.5 78V86M992.5 78V85M993.5 78V88M994.5 76V85M995.5 150V157M996.5 148V157M997.5 148V157M998.5 150V157M999.5 147V158M1000.5 150V157M1001.5 150V157M1002.5 150V159M1003.5 148V157M1004.5 147V157M1005.5 150V157M1006.5 147V159M1007.5 150V157M1008.5 150V157M1009.5 150V157M1010.5 150V157M1011.5 147V157M1012.5 150V158M1013.5 147V157M1014.5 150V158M1015.5 150V157M1016.5 150V158M45.5 71V157M95.5 78V162M145.5 71V157M195.5 78V162M245.5 71V157M295.5 78V162M345.5 71V157M395.5 78V162M445.5 71V157M495.5 78V162M545.5 71V157M595.5 78V162M645.5 71V157M695.5 78V162M745.5 71V157M795.5 78V162M845.5 71V157M895.5 78V162M945.5 71V157M995.5 78V162" stroke="#f2f200" stroke-width="1" fill="none"/>
<path d="M18.5 222V235M19.5 222V238M20.5 224V235M21.5 223V238M22.5 224V235M23.5 224V238M24.5 221V238M25.5 224V235M26.5 224V238M27.5 222V235M28.5 224V238M29.5 224V235M30.5 223V235M31.5 224V237M32.5 224V237M33.5 224V235M34.5 224V235M35.5 222V235M36.5 224V238M37.5 224V235M38.5 224V235M39.5 224V235M40.5 224V235M41.5 224V237M42.5 224V235M43.5 224V236M44.5 221V237M45.5 224V236M46.5 245V256M47.5 245V256M48.5 242V256M49.5 245V256M50.5 243V256M51.5 245V256M52.5 245V256M53.5 244V259M54.5 245V256M55.5 245V257M56.5 245V256M57.5 243V256M58.5 245V257M59.5 243V256M60.5 245V256M61.5 245V256M62.5 243V259M63.5 245V256M64.5 245V259M65.5 242V256M66.5 245V256M67.5 245V256M68.5 245V258M69.5 242V256M70.5 245V256M71.5 245V256M72.5 245V256M73.5 245V258M74.5 245V256M75.5 245V259M76.5 245V256M77.5 245V256M78.5 245V256M79.5 243V256M80.5 245V256M81.5 242V256M82.5 242V256M83.5 245V256M84.5 245V258M85.5 245V257M86.5 245V259M87.5 243V256M88.5 242V258M89.5 243V259M90.5 245V256M91.5 245V256M92.5 245V256M93.5 245V259M94.5 245V256M95.5 245V259M96.5 245V256M97.5 224V235M98.5 224V237M99.5 224V238M100.5 223V236M101.5 221V235M102.5 224V236M103.5 224V235M104.5 224V235M105.5 224V235M106.5 224V238M107.5 224V235M108.5 224V237M109.5 222V235M110.5 224V235M111.5 224V235M112.5 224V235M113.5 224V235M114.5 221V237M115.5 222V238M116.5 224V235M117.5 224V237M118.5 221V235M119.5 224V235M120.5 224V235M121.5 224V235M122.5 224V237M123.5 222V235M124.5 224V235M125.5 223V238M126.5 224V235M127.5 224V235M128.5 222V235M129.5 224V235M130.5 222V235M131.5 224V238M132.5 223V235M133.5 224V235M134.5 224V235M135.5 224V235M136.5 224V236M137.5 224V235M138.5 223V235M139.5 222V238M140.5 224V235M141.5 224V235M142.5 221V238M143.5 224V236M144.5 224V235M145.5 224V235M146.5 245V256M147.5 245V256M148.5 245V256M149.5 245V256M150.5 245V256M151.5 245V256M152.5 245V258M153.5 245V256M154.5 245V256M155.5 245V256M156.5 245V257M157.5 242V256M158.5 245V256M159.5 245V257M160.5 242V256M161.5 245V256M162.5 245V256M163.5 245V256M164.5 244V256M165.5 245V256M166.5 245V256M167.5 245V256M168.5 245V256M169.5 243V256M170.5 245V256M171.5 244V258M172.5 245V256M173.5 245V256M174.5 244V256M175.5 245V256M176.5 242V256M177.5 244V259M178.5 245V256M179.5 245V258M180.5 245V258M181.5 245V256M182.5 245V258M183.5 245V259M184.5 245V256M185.5 245V258M186.5 245V258M187.5 245V256M188.5 242V256M189.5 245V257M190.5 244V256M191.5 245V256M192.5 245V256M193.5 245V256M194.5 242V256M195.5 242V259M196.5 245V259M197.5 224V235M198.5 224V235M199.5 224V235M200.5 224V236M201.5 224V237M202.5 221V236M203.5 224V235M204.5 221V235M205.5 224V238M206.5 224V236M207.5 224V235M208.5 224V235M209.5 224V235M210.5 224V235M211.5 222V235M212.5 224V236M213.5 221V238M214.5 224V235M215.5 224V237M216.5 224V235M217.5 224V235M218.5 222V238M219.5 224V236M220.5 224V235M221.5 224V235M222.5 224V235M223.5 224V235M224.5 224V235M225.5 224V237M226.5 224V235M227.5 224V235M228.5 221V235M229.5 224V236M230.5 224V238M231.5 224V235M232.5 224V236M233.5 224V236M234.5 224V236M235.5 222V238M236.5 224V235M237.5 224V235M238.5 224V235M239.5 224V235M240.5 224V235M241.5 224V238M242.5 224V238M243.5 224V235M244.5 224V235M245.5 222V236M246.5 243V256M247.5 245V257M248.5 245V259M249.5 245V256M250.5 245V256M251.5 245V257M252.5 245V256M253.5 244V257M254.5 243V257M255.5 244V256M256.5 245V256M257.5 242V258M258.5 245V256M259.5 245V256M260.5 245V256M261.5 245V256M262.5 245V256M263.5 245V256M264.5 245V259M265.5 242V256M266.5 245V256M267.5 245V256M268.5 245V256M269.5 242V256M270.5 245V259M271.5 245V256M272.5 245V256M273.5 245V256M274.5 245V256M275.5 245V256M276.5 245V256M277.5 245V256M278.5 245V256M279.5 242V259M280.5 245V256M281.5 245V256M282.5 242V256M283.5 245V256M284.5 245V256M285.5 245V256M286.5 245V259M287.5 245V257M288.5 245V257M289.5 242V256M290.5 245V256M291.5 245V256M292.5 243V256M293.5 245V256M294.5 245V256M295.5 245V256M296.5 245V256M297.5 224V235M298.5 224V237M299.5 224V235M300.5 224V235M301.5 224V238M302.5 222V235M303.5 222V235M304.5 224V238M305.5 221V238M306.5 221V235M307.5 224V237M308.5 224V238M309.5 224V236M310.5 224V235M311.5 224V235M312.5 222V235M313.5 222V235M314.5 224V235M315.5 224V238M316.5 221V238M317.5 224V236M318.5 224V237M319.5 224V235M320.5 224V235M321.5 224V238M322.5 224V235M323.5 224V235M324.5 224V236M325.5 224V235M326.5 224V235M327.5 224V235M328.5 224V238M329.5 224V235M330.5 224V235M331.5 223V235M332.5 222V236M333.5 224V238M334.5 222V235M335.5 221V235M336.5 224V237M337.5 224V235M338.5 222V236M339.5 221V237M340.5 222V237M341.5 224V235M342.5 224V237M343.5 222V235M344.5 224V236M345.5 223V235M346.5 245V256M347.5 245V256M348.5 245V256M349.5 242V256M350.5 243V257M351.5 245V256M352.5 245V258M353.5 245V256M354.5 245V256M355.5 245V256M356.5 245V256M357.5 243V256M358.5 244V256M359.5 242V256M360.5 242V256M361.5 245V256M362.5 245V256M363.5 245V257M364.5 242V257M365.5 245V257M366.5 245V256M367.5 245V258M368.5 245V257M369.5 245V257M370.5 245V257M371.5 245V256M372.5 245V256M373.5 245V259M374.5 245V259M375.5 245V256M376.5 243V258M377.5 242V256M378.5 244V256M379.5 245V256M380.5 243V257M381.5 245V256M382.5 245V258M383.5 243V256M384.5 245V258M385.5 245V256M386.5 245V257M387.5 245V256M388.5 245V256M389.5 245V259M390.5 245V256M391.5 245V256M392.5 245V258M393.5 245V256M394.5 245V256M395.5 243V256M396.5 245V256M397.5 224V236M398.5 224V235M399.5 221V235M400.5 224V235M401.5 224V235M402.5 221V235M403.5 223V235M404.5 223V235M405.5 224V235M406.5 223V236M407.5 222V238M408.5 222V238M409.5 224V235M410.5 224V237M411.5 224V235M412.5 224V235M413.5 224V236M414.5 223V235M415.5 224V235M416.5 224V236M417.5 222V235M418.5 224V235M419.5 221V235M420.5 221V236M421.5 224V235M422.5 224V236M423.5 222V235M424.5 221V235M425.5 222V235M426.5 224V235M427.5 224V237M428.5 224V236M429.5 221V235M430.5 222V235M431.5 223V235M432.5 224V236M433.5 224V235M434.5 224V235M435.5 224V235M436.5 224V238M437.5 222V235M438.5 221V235M439.5 224V235M440.5 224V235M441.5 224V238M442.5 224V235M443.5 224V235M444.5 224V235M445.5 224V235M446.5 245V256M447.5 245V256M448.5 245V256M449.5 243V256M450.5 245V259M451.5 245V258M452.5 245V256M453.5 245V259M454.5 245V256M455.5 245V256M456.5 245V256M457.5 242V256M458.5 245V256M459.5 245V256M460.5 245V256M461.5 245V256M462.5 245V256M463.5 245V257M464.5 245V258M465.5 245V256M466.5 243V258M467.5 243V256M468.5 245V257M469.5 245V257M470.5 245V256M471.5 244V259M472.5 245V256M473.5 245V256M474.5 245V256M475.5 245V256M476.5 245V256M477.5 244V257M478.5 245V256M479.5 245V256M480.5 242V256M481.5 245V256M482.5 243V256M483.5 242V256M484.5 245V258M485.5 245V256M486.5 245V256M487.5 245V256M488.5 245V256M489.5 245V259M490.5 243V256M491.5 245V256M492.5 245V256M493.5 243V256M494.5 243V259M495.5 245V256M496.5 245V259M497.5 224V236M498.5 224V235M499.5 224V235M500.5 224V235M501.5 224V235M502.5 224V235M503.5 224V236M504.5 224V235M505.5 221V235M506.5 221V235M507.5 222V235M508.5 222V235M509.5 224V235M510.5 224V235M511.5 224V237M512.5 222V235M513.5 224V235M514.5 224V235M515.5 224V235M516.5 221V235M517.5 224V235M518.5 224V235M519.5 221V235M520.5 224V235M521.5 224V237M522.5 224V235M523.5 224V235M524.5 222V235M525.5 221V235M526.5 224V235M527.5 224V236M528.5 224V238M529.5 224V235M530.5 224V237M531.5 223V235M532.5 224V235M533.5 224V235M534.5 224V235M535.5 224V235M536.5 224V235M537.5 223V235M538.5 224V235M539.5 224V237M540.5 224V235M541.5 223V235M542.5 224V235M543.5 224V235M544.5 224V235M545.5 224V235M546.5 242V256M547.5 244V256M548.5 245V256M549.5 245V256M550.5 245V259M551.5 245V256M552.5 245V256M553.5 245V256M554.5 245V256M555.5 245V256M556.5 245V256M557.5 245V257M558.5 245V258M559.5 243V256M560.5 243V256M561.5 245V256M562.5 245V259M563.5 245V257M564.5 245V256M565.5 245V256M566.5 242V256M567.5 242V256M568.5 244V259M569.5 245V256M570.5 245V257M571.5 245V256M572.5 245V256M573.5 244V256M574.5 245V256M575.5 245V258M576.5 245V256M577.5 245V256M578.5 245V259M579.5 243V257M580.5 242V257M581.5 245V256M582.5 245V259M583.5 245V257M584.5 245V256M585.5 245V257M586.5 245V256M587.5 245V256M588.5 245V256M589.5 245V256M590.5 245V256M591.5 242V258M592.5 245V259M593.5 245V257M594.5 245V256M595.5 245V256M596.5 243V256M597.5 224V235M598.5 223V235M599.5 224V235M600.5 224V235M601.5 224V237M602.5 224V235M603.5 224V235M604.5 224V235M605.5 224V236M606.5 221V235M607.5 224V236M608.5 224V238M609.5 224V237M610.5 224V235M611.5 224V235M612.5 224V236M613.5 224V235M614.5 221V235M615.5 224V235M616.5 224V235M617.5 224V235M618.5 224V235M619.5 224V235M620.5 221V235M621.5 224V238M622.5 224V235M623.5 224V237M624.5 224V236M625.5 224V235M626.5 221V235M627.5 224V235M628.5 224V236M629.5 224V236M630.5 223V235M631.5 224V235M632.5 224V238M633.5 224V235M634.5 224V236M635.5 224V235M636.5 224V235M637.5 223V235M638.5 221V235M639.5 224V235M640.5 224V235M641.5 223V235M642.5 224V235M643.5 224V235M644.5 224V236M645.5 224V235M646.5 245V256M647.5 245V257M648.5 245V256M649.5 245V259M650.5 245V256M651.5 245V256M652.5 242V256M653.5 242V257M654.5 243V256M655.5 245V259M656.5 245V256M657.5 244V257M658.5 245V256M659.5 243V256M660.5 245V256M661.5 245V256M662.5 245V256M663.5 245V256M664.5 245V259M665.5 243V256M666.5 242V256M667.5 245V256M668.5 245V256M669.5 245V256M670.5 243V259M671.5 245V256M672.5 245V256M673.5 245V256M674.5 245V259M675.5 244V256M676.5 245V256M677.5 244V256M678.5 245V256M679.5 243V256M680.5 245V257M681.5 245V259M682.5 242V256M683.5 245V256M684.5 245V256M685.5 245V257M686.5 244V256M687.5 245V257M688.5 245V256M689.5 242V258M690.5 243V256M691.5 244V256M692.5 245V256M693.5 245V257M694.5 245V256M695.5 245V257M696.5 245V257M697.5 223V235M698.5 224V235M699.5 224V235M700.5 224V235M701.5 224V235M702.5 224V238M703.5 224V235M704.5 224V235M705.5 222V235M706.5 223V235M707.5 224V236M708.5 224V236M709.5 221V235M710.5 224V236M711.5 223V235M712.5 222V235M713.5 224V236M714.5 224V236M715.5 224V235M716.5 224V237M717.5 224V237M718.5 221V236M719.5 224V237M720.5 224V238M721.5 223V235M722.5 224V237M723.5 224V236M724.5 224V235M725.5 223V235M726.5 224V238M727.5 224V236M728.5 224V235M729.5 224V235M730.5 223V237M731.5 224V237M732.5 224V236M733.5 224V238M734.5 224V235M735.5 224V237M736.5 224V236M737.5 224V235M738.5 222V237M739.5 224V237M740.5 224V237M741.5 224V235M742.5 222V235M743.5 223V235M744.5 224V235M745.5 224V235M746.5 242V258M747.5 245V258M748.5 243V256M749.5 245V256M750.5 245V257M751.5 243V256M752.5 244V256M753.5 245V256M754.5 245V256M755.5 245V257M756.5 245V256M757.5 243V258M758.5 245V256M759.5 245V256M760.5 244V258M761.5 243V258M762.5 244V256M763.5 245V258M764.5 245V257M765.5 243V256M766.5 245V256M767.5 245V259M768.5 243V257M769.5 245V258M770.5 245V257M771.5 245V258M772.5 245V259M773.5 245V256M774.5 245V259M775.5 245V257M776.5 245V256M777.5 244V256M778.5 245V256M779.5 245V256M780.5 245V256M781.5 244V256M782.5 245V256M783.5 245V256M784.5 245V256M785.5 245V258M786.5 242V256M787.5 245V256M788.5 245V257M789.5 245V259M790.5 245V256M791.5 245V258M792.5 245V256M793.5 245V256M794.5 245V256M795.5 245V256M796.5 244V256M797.5 224V238M798.5 221V235M799.5 224V235M800.5 224V235M801.5 224V235M802.5 221V237M803.5 224V235M804.5 224V235M805.5 224V235M806.5 224V235M807.5 224V235M808.5 224V235M809.5 224V235M810.5 221V235M811.5 224V235M812.5 224V235M813.5 224V237M814.5 224V236M815.5 224V235M816.5 224V235M817.5 223V235M818.5 224V235M819.5 223V235M820.5 223V236M821.5 221V235M822.5 223V236M823.5 224V237M824.5 222V235M825.5 224V235M826.5 224V236M827.5 224V236M828.5 224V235M829.5 224V235M830.5 224V235M831.5 224V238M832.5 224V235M833.5 224V235M834.5 224V237M835.5 224V235M836.5 221V238M837.5 224V235M838.5 224V235M839.5 224V235M840.5 224V238M841.5 221V235M842.5 224V235M843.5 224V235M844.5 223V235M845.5 222V238M846.5 245V256M847.5 245V258M848.5 245V256M849.5 244V258M850.5 245V256M851.5 245V256M852.5 245V256M853.5 245V259M854.5 245V258M855.5 245V259M856.5 245V256M857.5 244V256M858.5 245V256M859.5 245V256M860.5 245V259M861.5 243V256M862.5 242V256M863.5 245V256M864.5 245V256M865.5 245V256M866.5 245V256M867.5 245V258M868.5 243V259M869.5 243V256M870.5 242V259M871.5 245V256M872.5 243V256M873.5 245V256M874.5 242V257M875.5 245V256M876.5 245V256M877.5 245V258M878.5 245V256M879.5 245V257M880.5 245V256M881.5 242V256M882.5 245V256M883.5 244V256M884.5 245V256M885.5 245V256M886.5 244V256M887.5 245V256M888.5 245V256M889.5 242V256M890.5 245V259M891.5 245V259M892.5 245V256M893.5 245V257M894.5 245V256M895.5 243V256M896.5 245V256M897.5 224V235M898.5 224V237M899.5 224V235M900.5 224V236M901.5 221V235M902.5 224V235M903.5 224V238M904.5 224V235M905.5 224V235M906.5 224V238M907.5 224V235M908.5 224V238M909.5 224V235M910.5 224V235M911.5 224V235M912.5 221V235M913.5 224V235M914.5 224V235M915.5 224V235M916.5 224V235M917.5 224V235M918.5 224V235M919.5 223V235M920.5 223V236M921.5 224V235M922.5 222V235M923.5 224V235M924.5 224V235M925.5 224V235M926.5 224V235M927.5 224V235M928.5 224V235M929.5 224V235M930.5 224V237M931.5 224V235M932.5 224V237M933.5 224V235M934.5 224V235M935.5 224V235M936.5 224V235M937.5 223V235M938.5 221V238M939.5 224V235M940.5 221V235M941.5 222V235M942.5 224V235M943.5 224V235M944.5 224V237M945.5 224V235M946.5 245V256M947.5 245V257M948.5 245V256M949.5 245V256M950.5 244V256M951.5 245V256M952.5 245V256M953.5 245V257M954.5 245V256M955.5 245V256M956.5 243V256M957.5 245V259M958.5 245V257M959.5 245V258M960.5 244V256M961.5 245V257M962.5 245V256M963.5 244V256M964.5 244V257M965.5 245V259M966.5 245V258M967.5 245V256M968.5 245V256M969.5 245V257M970.5 245V257M971.5 245V256M972.5 245V256M973.5 244V256M974.5 245V256M975.5 244V258M976.5 245V256M977.5 245V256M978.5 245V259M979.5 245V256M980.5 243V256M981.5 245V256M982.5 245V259M983.5 242V256M984.5 245V258M985.5 245V256M986.5 245V256M987.5 245V256M988.5 245V256M989.5 242V256M990.5 242V256M991.5 245V256M992.5 245V256M993.5 245V259M994.5 245V256M995.5 245V258M996.5 245V256M997.5 224V235M998.5 223V235M999.5 224V236M1000.5 223V235M1001.5 224V235M1002.5 224V235M1003.5 221V235M1004.5 224V235M1005.5 224V235M1006.5 224V235M1007.5 224V237M1008.5 224V238M1009.5 224V237M1010.5 224V235M1011.5 224V235M1012.5 223V236M1013.5 223V237M1014.5 224V235M1015.5 224V235M1016.5 224V235M46.5 224V258M97.5 222V256M146.5 224V258M197.5 222V256M246.5 224V258M297.5 222V256M346.5 224V258M397.5 222V256M446.5 224V258M497.5 222V256M546.5 224V258M597.5 222V256M646.5 224V258M697.5 222V256M746.5 224V258M797.5 222V256M846.5 224V258M897.5 222V256M946.5 224V258M997.5 222V256" stroke="#f000f0" stroke-width="1" fill="none"/>
<path d="M18.5 410V422M19.5 409V423M20.5 410V422M21.5 410V421M22.5 409V421M23.5 409V422M24.5 407V421M25.5 408V422M26.5 408V421M27.5 410V423M28.5 408V422M29.5 409V421M30.5 410V422M31.5 410V421M32.5 410V421M33.5 407V421M34.5 408V424M35.5 408V421M36.5 410V423M37.5 409V421M38.5 410V421M39.5 409V421M40.5 407V424M41.5 409V421M42.5 407V421M43.5 410V421M44.5 408V421M45.5 410V421M46.5 408V422M47.5 410V421M48.5 410V421M49.5 410V424M50.5 407V424M51.5 410V423M52.5 410V421M53.5 409V422M54.5 410V421M55.5 410V422M56.5 409V423M57.5 410V421M58.5 407V421M59.5 408V421M60.5 408V421M61.5 409V421M62.5 408V424M63.5 410V421M64.5 407V421M65.5 410V424M66.5 410V424M67.5 409V422M68.5 410V424M69.5 410V424M70.5 410V423M71.5 410V424M72.5 408V422M73.5 410V421M74.5 408V421M75.5 410V423M76.5 407V422M77.5 410V421M78.5 410V421M79.5 409V422M80.5 409V422M81.5 407V422M82.5 410V423M83.5 408V421M84.5 410V421M85.5 410V423M86.5 407V421M87.5 410V424M88.5 408V422M89.5 410V421M90.5 408V421M91.5 408V421M92.5 410V422M93.5 409V421M94.5 407V423M95.5 407V422M96.5 408V423M97.5 408V421M98.5 410V421M99.5 407V424M100.5 410V424M101.5 408V421M102.5 407V422M103.5 409V424M104.5 410V421M105.5 409V421M106.5 410V421M107.5 410V421M108.5 409V421M109.5 408V424M110.5 410V423M111.5 410V421M112.5 410V422M113.5 410V421M114.5 409V421M115.5 407V423M116.5 410V424M117.5 407V421M118.5 410V424M119.5 410V423M120.5 407V422M121.5 410V421M122.5 410V421M123.5 407V422M124.5 408V422M125.5 409V424M126.5 410V423M127.5 407V423M128.5 407V421M129.5 410V422M130.5 409V423M131.5 409V421M132.5 410V423M133.5 410V424M134.5 410V424M135.5 409V421M136.5 409V423M137.5 410V422M138.5 408V423M139.5 409V423M140.5 409V421M141.5 409V421M142.5 407V421M143.5 407V421M144.5 409V422M145.5 407V421M146.5 409V422M147.5 407V422M148.5 410V422M149.5 410V423M150.5 407V423M151.5 408V421M152.5 409V424M153.5 410V422M154.5 407V423M155.5 410V424M156.5 410V422M157.5 410V423M158.5 407V421M159.5 409V423M160.5 407V422M161.5 410V421M162.5 407V421M163.5 408V422M164.5 410V421M165.5 407V421M166.5 408V423M167.5 409V424M168.5 410V421M169.5 410V423M170.5 410V423M171.5 409V422M172.5 410V423M173.5 410V424M174.5 410V421M175.5 410V421M176.5 410V421M177.5 410V424M178.5 407V423M179.5 407V421M180.5 408V421M181.5 409V424M182.5 410V423M183.5 407V421M184.5 410V422M185.5 410V421M186.5 407V423M187.5 410V423M188.5 407V421M189.5 410V421M190.5 410V422M191.5 410V421M192.5 409V421M193.5 407V421M194.5 410V421M195.5 409V423M196.5 407V424M197.5 410V422M198.5 408V424M199.5 410V423M200.5 408V422M201.5 410V421M202.5 410V423M203.5 409V421M204.5 409V422M205.5 410V421M206.5 409V421M207.5 409V423M208.5 409V421M209.5 408V421M210.5 410V421M211.5 409V422M212.5 410V423M213.5 407V424M214.5 409V421M215.5 410V422M216.5 409V424M217.5 410V421M218.5 407V424M219.5 410V423M220.5 409V423M221.5 410V422M222.5 408V423M223.5 407V424M224.5 407V421M225.5 407V422M226.5 408V424M227.5 410V421M228.5 410V423M229.5 409V421M230.5 410V421M231.5 410V421M232.5 409V421M233.5 409V422M234.5 407V424M235.5 408V421M236.5 407V422M237.5 407V423M238.5 408V421M239.5 410V422M240.5 410V421M241.5 410V424M242.5 410V424M243.5 410V423M244.5 408V422M245.5 407V424M246.5 408V422M247.5 410V423M248.5 410V423M249.5 408V421M250.5 410V423M251.5 410V422M252.5 410V421M253.5 407V424M254.5 410V424M255.5 410V424M256.5 408V421M257.5 408V424M258.5 407V421M259.5 410V421M260.5 410V421M261.5 409V421M262.5 408V422M263.5 410V421M264.5 407V421M265.5 410V421M266.5 409V422M267.5 407V424M268.5 410V424M269.5 409V421M270.5 407V422M271.5 408V422M272.5 407V422M273.5 410V421M274.5 407V421M275.5 410V421M276.5 408V421M277.5 409V421M278.5 409V421M279.5 410V424M280.5 410V424M281.5 408V421M282.5 409V421M283.5 408V421M284.5 410V424M285.5 409V422M286.5 408V423M287.5 409V421M288.5 410V421M289.5 410V422M290.5 407V421M291.5 410V422M292.5 409V424M293.5 409V421M294.5 407V421M295.5 408V422M296.5 408V421M297.5 410V422M298.5 410V422M299.5 410V421M300.5 410V422M301.5 409V421M302.5 410V421M303.5 407V421M304.5 409V422M305.5 409V424M306.5 410V422M307.5 407V421M308.5 408V421M309.5 407V422M310.5 409V424M311.5 410V422M312.5 410V421M313.5 410V421M314.5 410V423M315.5 408V421M316.5 410V423M317.5 407V421M318.5 410V424M319.5 410V422M320.5 408V422M321.5 409V423M322.5 410V422M323.5 410V421M324.5 409V421M325.5 407V424M326.5 409V421M327.5 409V423M328.5 407V423M329.5 407V421M330.5 408V421M331.5 410V423M332.5 408V421M333.5 410V422M334.5 410V424M335.5 410V421M336.5 409V423M337.5 410V422M338.5 407V422M339.5 410V422M340.5 410V424M341.5 410V424M342.5 409V421M343.5 408V421M344.5 409V422M345.5 409V423M346.5 407V421M347.5 409V421M348.5 408V424M349.5 410V421M350.5 410V421M351.5 410V421M352.5 408V423M353.5 408V421M354.5 409V424M355.5 410V424M356.5 410V422M357.5 410V421M358.5 409V423M359.5 410V422M360.5 410V422M361.5 410V421M362.5 407V422M363.5 408V421M364.5 410V421M365.5 409V422M366.5 407V421M367.5 408V423M368.5 409V422M369.5 410V421M370.5 410V421M371.5 408V421M372.5 408V421M373.5 409V421M374.5 410V424M375.5 407V422M376.5 409V421M377.5 407V421M378.5 410V424M379.5 408V423M380.5 408V421M381.5 409V421M382.5 409V423M383.5 407V423M384.5 408V421M385.5 407V421M386.5 410V421M387.5 410V424M388.5 410V424M389.5 410V421M390.5 410V424M391.5 408V421M392.5 410V422M393.5 410V424M394.5 410V424M395.5 410V421M396.5 409V421M397.5 407V423M398.5 410V421M399.5 410V424M400.5 410V422M401.5 409V421M402.5 410V421M403.5 409V424M404.5 407V421M405.5 410V421M406.5 408V423M407.5 410V421M408.5 410V424M409.5 410V422M410.5 410V423M411.5 409V422M412.5 410V423M413.5 410V422M414.5 408V421M415.5 410V423M416.5 407V422M417.5 409V422M418.5 409V423M419.5 410V422M420.5 409V421M421.5 409V421M422.5 407V424M423.5 410V421M424.5 409V421M425.5 407V423M426.5 409V424M427.5 410V421M428.5 408V421M429.5 410V421M430.5 407V422M431.5 408V421M432.5 410V421M433.5 410V421M434.5 410V423M435.5 407V422M436.5 410V422M437.5 407V421M438.5 410V422M439.5 408V423M440.5 410V422M441.5 410V422M442.5 409V422M443.5 408V421M444.5 409V422M445.5 410V421M446.5 408V421M447.5 409V421M448.5 408V423M449.5 408V421M450.5 409V421M451.5 410V423M452.5 410V421M453.5 410V421M454.5 408V421M455.5 409V424M456.5 408V424M457.5 407V424M458.5 410V424M459.5 408V423M460.5 410V422M461.5 410V421M462.5 407V422M463.5 407V421M464.5 407V424M465.5 407V421M466.5 410V424M467.5 410V421M468.5 407V424M469.5 410V423M470.5 410V423M471.5 410V421M472.5 410V424M473.5 408V423M474.5 410V421M475.5 410V421M476.5 410V421M477.5 409V424M478.5 410V421M479.5 408V424M480.5 410V423M481.5 408V421M482.5 409V422M483.5 407V421M484.5 410V422M485.5 409V421M486.5 409V421M487.5 408V422M488.5 409V422M489.5 410V422M490.5 408V422M491.5 410V421M492.5 410V421M493.5 409V421M494.5 407V422M495.5 410V421M496.5 408V421M497.5 407V421M498.5 410V424M499.5 409V423M500.5 410V422M501.5 410V421M502.5 410V421M503.5 408V423M504.5 409V422M505.5 410V424M506.5 409V424M507.5 408V421M508.5 408V422M509.5 410V423M510.5 410V424M511.5 410V421M512.5 408V424M513.5 408V423M514.5 407V421M515.5 407V421M516.5 410V424M517.5 408V423M518.5 409V424M519.5 408V422M520.5 408V421M521.5 410V424M522.5 407V421M523.5 408V421M524.5 407V423M525.5 408V424M526.5 407V423M527.5 410V421M528.5 409V424M529.5 410V422M530.5 409V423M531.5 410V421M532.5 410V424M533.5 410V423M534.5 408V421M535.5 410V421M536.5 410V422M537.5 408V424M538.5 410V421M539.5 410V421M540.5 410V421M541.5 407V421M542.5 408V423M543.5 408V421M544.5 408V421M545.5 409V421M546.5 408V421M547.5 410V423M548.5 407V422M549.5 409V422M550.5 410V424M551.5 410V422M552.5 408V421M553.5 409V423M554.5 407V424M555.5 408V421M556.5 408V423M557.5 410V421M558.5 410V424M559.5 410V424M560.5 408V421M561.5 410V424M562.5 410V421M563.5 407V421M564.5 408V421M565.5 407V421M566.5 409V421M567.5 409V421M568.5 408V421M569.5 410V421M570.5 409V421M571.5 410V421M572.5 410V421M573.5 410V423M574.5 410V421M575.5 410V422M576.5 409V422M577.5 410V424M578.5 410V421M579.5 407V421M580.5 410V423M581.5 410V421M582.5 408V422M583.5 408V421M584.5 409V424M585.5 408V421M586.5 409V424M587.5 407V421M588.5 410V424M589.5 410V421M590.5 407V421M591.5 410V423M592.5 409V421M593.5 408V424M594.5 409V423M595.5 408V423M596.5 407V423M597.5 408V423M598.5 407V423M599.5 410V421M600.5 410V423M601.5 410V423M602.5 410V422M603.5 410V424M604.5 409V423M605.5 408V422M606.5 407V424M607.5 410V424M608.5 409V422M609.5 407V422M610.5 410V421M611.5 409V421M612.5 409V421M613.5 409V421M614.5 408V423M615.5 408V421M616.5 407V422M617.5 410V424M618.5 409V422M619.5 407V421M620.5 407V422M621.5 410V424M622.5 408V423M623.5 407V421M624.5 409V423M625.5 410V424M626.5 410V421M627.5 407V421M628.5 409V423M629.5 407V421M630.5 409V424M631.5 409V423M632.5 410V421M633.5 409V424M634.5 410V421M635.5 408V422M636.5 407V422M637.5 407V421M638.5 410V424M639.5 408V424M640.5 409V423M641.5 409V423M642.5 410V422M643.5 410V424M644.5 407V422M645.5 409V422M646.5 409V423M647.5 407V421M648.5 410V421M649.5 407V421M650.5 407V421M651.5 410V423M652.5 410V423M653.5 410V422M654.5 409V421M655.5 410V421M656.5 410V424M657.5 407V421M658.5 410V421M659.5 408V421M660.5 408V421M661.5 409V421M662.5 408V423M663.5 407V422M664.5 409V423M665.5 409V422M666.5 410V422M667.5 410V423M668.5 410V421M669.5 410V424M670.5 408V421M671.5 410V421M672.5 409V423M673.5 407V421M674.5 410V421M675.5 410V421M676.5 409V423M677.5 410V424M678.5 407V421M679.5 409V424M680.5 410V422M681.5 409V421M682.5 408V421M683.5 410V421M684.5 407V421M685.5 407V423M686.5 407V424M687.5 409V423M688.5 410V423M689.5 409V421M690.5 408V421M691.5 410V424M692.5 408V421M693.5 407V422M694.5 409V421M695.5 408V423M696.5 410V423M697.5 410V424M698.5 407V422M699.5 408V421M700.5 408V421M701.5 410V424M702.5 409V421M703.5 410V421M704.5 407V421M705.5 409V421M706.5 409V421M707.5 410V422M708.5 410V421M709.5 410V421M710.5 410V424M711.5 410V421M712.5 409V424M713.5 407V424M714.5 410V422M715.5 407V421M716.5 409V421M717.5 409V423M718.5 410V421M719.5 410V421M720.5 410V421M721.5 410V421M722.5 408V422M723.5 409V423M724.5 409V421M725.5 408V422M726.5 410V421M727.5 408V422M728.5 410V423M729.5 408V424M730.5 407V422M731.5 409V423M732.5 410V422M733.5 410V423M734.5 410V421M735.5 410V422M736.5 410V422M737.5 408V422M738.5 408V422M739.5 409V421M740.5 410V422M741.5 407V421M742.5 410V421M743.5 410V424M744.5 410V423M745.5 410V423M746.5 408V422M747.5 407V421M748.5 408V422M749.5 410V422M750.5 408V421M751.5 410V424M752.5 410V423M753.5 410V423M754.5 410V424M755.5 407V421M756.5 410V421M757.5 408V422M758.5 410V422M759.5 410V421M760.5 409V421M761.5 407V421M762.5 407V422M763.5 410V422M764.5 410V424M765.5 410V421M766.5 410V422M767.5 410V421M768.5 410V422M769.5 407V421M770.5 410V421M771.5 410V421M772.5 409V421M773.5 407V421M774.5 410V423M775.5 410V421M776.5 407V421M777.5 410V424M778.5 407V421M779.5 410V421M780.5 408V421M781.5 410V422M782.5 410V422M783.5 409V421M784.5 408V421M785.5 410V424M786.5 410V421M787.5 408V424M788.5 407V423M789.5 409V424M790.5 408V421M791.5 410V422M792.5 409V423M793.5 409V423M794.5 407V421M795.5 407V424M796.5 410V421M797.5 408V423M798.5 409V424M799.5 407V421M800.5 410V421M801.5 410V422M802.5 408V421M803.5 410V422M804.5 410V421M805.5 409V421M806.5 410V424M807.5 408V422M808.5 410V421M809.5 407V421M810.5 409V421M811.5 408V423M812.5 408V422M813.5 407V424M814.5 410V424M815.5 410V421M816.5 410V422M817.5 409V421M818.5 408V422M819.5 407V423M820.5 408V424M821.5 409V422M822.5 410V421M823.5 410V422M824.5 410V421M825.5 408V421M826.5 407V423M827.5 407V421M828.5 410V422M829.5 407V423M830.5 408V424M831.5 409V422M832.5 410V422M833.5 407V421M834.5 410V422M835.5 410V423M836.5 409V422M837.5 409V421M838.5 409V421M839.5 409V423M840.5 410V423M841.5 408V421M842.5 410V422M843.5 408V422M844.5 410V424M845.5 410V424M846.5 408V421M847.5 407V421M848.5 408V422M849.5 410V422M850.5 410V422M851.5 410V421M852.5 410V422M853.5 410V421M854.5 408V421M855.5 410V423M856.5 407V421M857.5 409V423M858.5 408V422M859.5 410V421M860.5 410V421M861.5 409V421M862.5 409V424M863.5 410V423M864.5 409V424M865.5 408V422M866.5 410V421M867.5 410V421M868.5 407V424M869.5 410V421M870.5 408V421M871.5 410V421M872.5 409V421M873.5 410V421M874.5 409V424M875.5 410V424M876.5 407V423M877.5 408V422M878.5 410V421M879.5 408V421M880.5 410V422M881.5 410V422M882.5 407V421M883.5 409V422M884.5 408V421M885.5 410V424M886.5 410V421M887.5 410V421M888.5 410V421M889.5 410V422M890.5 408V421M891.5 409V424M892.5 408V423M893.5 409V423M894.5 408V421M895.5 410V423M896.5 410V421M897.5 407V422M898.5 408V423M899.5 407V424M900.5 410V424M901.5 407V424M902.5 410V423M903.5 407V421M904.5 410V421M905.5 408V421M906.5 408V422M907.5 407V421M908.5 410V421M909.5 410V421M910.5 410V424M911.5 409V421M912.5 410V421M913.5 410V422M914.5 408V422M915.5 408V421M916.5 410V423M917.5 408V424M918.5 410V421M919.5 409V421M920.5 408V422M921.5 410V422M922.5 407V422M923.5 409V421M924.5 410V421M925.5 410V422M926.5 410V424M927.5 410V421M928.5 409V423M929.5 407V421M930.5 410V421M931.5 409V424M932.5 408V423M933.5 408V421M934.5 409V421M935.5 407V421M936.5 407V421M937.5 407V421M938.5 409V422M939.5 407V421M940.5 410V422M941.5 407V424M942.5 407V421M943.5 410V423M944.5 407V423M945.5 407V423M946.5 410V421M947.5 410V424M948.5 407V421M949.5 410V423M950.5 410V424M951.5 409V423M952.5 407V423M953.5 408V421M954.5 410V421M955.5 410V424M956.5 410V421M957.5 408V422M958.5 410V423M959.5 408V422M960.5 410V423M961.5 408V423M962.5 410V424M963.5 410V421M964.5 408V421M965.5 408V422M966.5 409V421M967.5 408V424M968.5 407V422M969.5 410V421M970.5 410V422M971.5 410V424M972.5 410V421M973.5 408V421M974.5 407V423M975.5 409V423M976.5 407V421M977.5 409V422M978.5 410V424M979.5 410V421M980.5 409V422M981.5 408V422M982.5 410V422M983.5 410V423M984.5 410V423M985.5 409V423M986.5 410V421M987.5 407V422M988.5 410V421M989.5 407V422M990.5 410V421M991.5 410V421M992.5 409V424M993.5 410V423M994.5 410V421M995.5 410V421M996.5 408V422M997.5 407V421M998.5 409V422M999.5 410V422M1000.5 408V422M1001.5 408V421M1002.5 407V422M1003.5 410V422M1004.5 409V422M1005.5 407V423M1006.5 410V422M1007.5 410V424M1008.5 407V424M1009.5 410V421M1010.5 408V421M1011.5 409V422M1012.5 407V421M1013.5 408V421M1014.5 408V421M1015.5 408V422M1016.5 410V422M45.5 366V460M95.5 372V464M145.5 366V460M195.5 372V464M245.5 366V460M295.5 372V464M345.5 366V460M395.5 372V464M445.5 366V460M495.5 372V464M545.5 366V460M595.5 372V464M645.5 366V460M695.5 372V464M745.5 366V460M795.5 372V464M845.5 366V460M895.5 372V464M945.5 366V460M995.5 372V464" stroke="#00f4f4" stroke-width="1" fill="none"/>
<path d="M18.5 549V558M19.5 546V558M20.5 545V558M21.5 545V557M22.5 547V557M23.5 544V559M24.5 546V555M25.5 545V556M26.5 545V558M27.5 546V555M28.5 545V555M29.5 543V555M30.5 543V558M31.5 543V555M32.5 543V555M33.5 546V556M34.5 543V558M35.5 546V555M36.5 546V555M37.5 544V556M38.5 546V557M39.5 544V557M40.5 546V555M41.5 545V555M42.5 546V558M43.5 543V558M44.5 544V556M45.5 546V555M46.5 545V555M47.5 546V558M48.5 546V555M49.5 546V555M50.5 546V555M51.5 544V557M52.5 544V556M53.5 545V555M54.5 546V555M55.5 546V556M56.5 544V555M57.5 546V555M58.5 544V555M59.5 545V556M60.5 546V556M61.5 543V555M62.5 546V557M63.5 545V558M64.5 546V556M65.5 546V555M66.5 547V558M67.5 547V559M68.5 547V557M69.5 547V557M70.5 547V558M71.5 549V561M72.5 549V558M73.5 549V561M74.5 549V558M75.5 549V558M76.5 547V563M77.5 549V560M78.5 548V563M79.5 549V562M80.5 552V563M81.5 552V564M82.5 551V562M83.5 552V561M84.5 549V561M85.5 549V564M86.5 549V561M87.5 552V562M88.5 552V561M89.5 552V561M90.5 549V561M91.5 552V563M92.5 552V561M93.5 552V562M94.5 551V561M95.5 552V561M96.5 549V561M97.5 552V562M98.5 550V561M99.5 552V561M100.5 550V561M101.5 552V563M102.5 551V561M103.5 552V562M104.5 552V562M105.5 552V561M106.5 552V564M107.5 551V562M108.5 552V563M109.5 552V563M110.5 550V560M111.5 550V560M112.5 547V560M113.5 550V562M114.5 547V558M115.5 549V558M116.5 548V558M117.5 549V558M118.5 549V558M119.5 544V559M120.5 547V560M121.5 547V560M122.5 547V557M123.5 545V557M124.5 546V555M125.5 546V555M126.5 546V555M127.5 546V555M128.5 544V557M129.5 546V555M130.5 543V556M131.5 546V555M132.5 546V557M133.5 545V555M134.5 546V557M135.5 546V555M136.5 546V555M137.5 546V558M138.5 546V555M139.5 545V556M140.5 546V555M141.5 546V555M142.5 546V555M143.5 544V557M144.5 543V555M145.5 543V556M146.5 546V555M147.5 544V558M148.5 546V557M149.5 546V558M150.5 546V558M151.5 546V555M152.5 545V555M153.5 546V555M154.5 546V556M155.5 544V556M156.5 546V555M157.5 546V556M158.5 546V555M159.5 546V555M160.5 546V555M161.5 545V555M162.5 543V555M163.5 546V555M164.5 546V555M165.5 546V556M166.5 546V557M167.5 545V557M168.5 547V558M169.5 544V559M170.5 547V557M171.5 549V558M172.5 548V560M173.5 549V558M174.5 549V560M175.5 549V558M176.5 550V562M177.5 550V560M178.5 550V563M179.5 550V561M180.5 549V563M181.5 551V561M182.5 552V561M183.5 551V561M184.5 551V564M185.5 549V564M186.5 552V564M187.5 552V561M188.5 549V564M189.5 552V564M190.5 552V563M191.5 552V561M192.5 552V561M193.5 552V564M194.5 551V562M195.5 552V561M196.5 551V564M197.5 549V561M198.5 552V563M199.5 552V561M200.5 550V562M201.5 551V561M202.5 552V563M203.5 549V561M204.5 550V561M205.5 549V563M206.5 552V561M207.5 552V561M208.5 551V561M209.5 552V562M210.5 550V560M211.5 550V560M212.5 548V560M213.5 550V560M214.5 548V561M215.5 548V561M216.5 548V561M217.5 549V558M218.5 547V558M219.5 547V557M220.5 547V560M221.5 547V557M222.5 544V557M223.5 547V558M224.5 546V555M225.5 546V555M226.5 546V557M227.5 546V555M228.5 546V557M229.5 546V555M230.5 544V557M231.5 544V557M232.5 544V558M233.5 546V555M234.5 544V558M235.5 545V556M236.5 544V556M237.5 546V557M238.5 546V558M239.5 544V555M240.5 546V558M241.5 546V555M242.5 543V558M243.5 546V555M244.5 546V555M245.5 545V558M246.5 546V557M247.5 544V555M248.5 546V555M249.5 543V558M250.5 546V556M251.5 546V555M252.5 545V558M253.5 546V555M254.5 543V556M255.5 545V555M256.5 545V555M257.5 545V557M258.5 544V557M259.5 546V555M260.5 546V555M261.5 545V555M262.5 546V555M263.5 544V558M264.5 543V556M265.5 546V555M266.5 547V559M267.5 547V557M268.5 544V557M269.5 547V557M270.5 546V558M271.5 546V559M272.5 547V558M273.5 549V558M274.5 549V561M275.5 549V558M276.5 548V560M277.5 549V560M278.5 547V560M279.5 550V560M280.5 552V561M281.5 552V561M282.5 552V561M283.5 552V562M284.5 552V561M285.5 549V563M286.5 552V563M287.5 549V561M288.5 552V561M289.5 552V561M290.5 552V561M291.5 552V561M292.5 550V561M293.5 552V561M294.5 552V563M295.5 552V561M296.5 552V561M297.5 552V563M298.5 550V563M299.5 550V562M300.5 549V561M301.5 552V563M302.5 550V561M303.5 552V562M304.5 551V561M305.5 551V561M306.5 549V561M307.5 549V561M308.5 552V561M309.5 552V562M310.5 550V560M311.5 549V560M312.5 550V561M313.5 549V560M314.5 546V560M315.5 549V561M316.5 546V558M317.5 549V558M318.5 549V561M319.5 544V559M320.5 547V557M321.5 547V557M322.5 547V560M323.5 547V557M324.5 546V555M325.5 543V558M326.5 546V555M327.5 544V555M328.5 546V555M329.5 545V555M330.5 546V555M331.5 544V555M332.5 546V555M333.5 545V557M334.5 543V555M335.5 546V556M336.5 546V556M337.5 546V555M338.5 546V555M339.5 546V555M340.5 546V558M341.5 543V557M342.5 546V555M343.5 544V556M344.5 544V558M345.5 545V556M346.5 546V557M347.5 544V555M348.5 543V555M349.5 546V557M350.5 546V555M351.5 546V555M352.5 546V555M353.5 546V558M354.5 546V555M355.5 543V555M356.5 546V558M357.5 546V555M358.5 543V555M359.5 546V556M360.5 546V555M361.5 544V557M362.5 544V555M363.5 546V557M364.5 543V555M365.5 543V557M366.5 547V559M367.5 547V557M368.5 547V559M369.5 547V557M370.5 547V557M371.5 549V560M372.5 548V560M373.5 549V558M374.5 549V558M375.5 549V560M376.5 550V561M377.5 550V563M378.5 550V562M379.5 548V563M380.5 551V563M381.5 552V561M382.5 552V561M383.5 552V561M384.5 549V562M385.5 551V561M386.5 552V562M387.5 551V562M388.5 551V564M389.5 552V562M390.5 552V561M391.5 551V564M392.5 552V561M393.5 552V563M394.5 552V561M395.5 552V562M396.5 552V563M397.5 552V564M398.5 552V561M399.5 551V561M400.5 550V564M401.5 549V563M402.5 552V561M403.5 552V561M404.5 552V564M405.5 552V563M406.5 550V561M407.5 549V561M408.5 552V564M409.5 551V561M410.5 549V560M411.5 550V560M412.5 549V561M413.5 548V560M414.5 549V558M415.5 549V559M416.5 549V558M417.5 548V561M418.5 549V558M419.5 547V557M420.5 545V557M421.5 546V560M422.5 546V560M423.5 547V557M424.5 543V555M425.5 546V555M426.5 546V555M427.5 546V555M428.5 544V557M429.5 546V555M430.5 546V558M431.5 546V556M432.5 545V555M433.5 544V555M434.5 545V556M435.5 545V556M436.5 546V555M437.5 546V555M438.5 546V558M439.5 546V555M440.5 546V558M441.5 546V555M442.5 545V555M443.5 544V558M444.5 543V557M445.5 545V558M446.5 546V557M447.5 546V558M448.5 546V556M449.5 545V555M450.5 543V556M451.5 544V555M452.5 546V555M453.5 546V556M454.5 543V555M455.5 546V556M456.5 544V555M457.5 546V558M458.5 545V557M459.5 546V555M460.5 544V555M461.5 546V558M462.5 545V555M463.5 546V555M464.5 546V555M465.5 546V555M466.5 547V557M467.5 545V558M468.5 545V560M469.5 547V557M470.5 547V560M471.5 549V558M472.5 549V560M473.5 547V558M474.5 549V558M475.5 547V558M476.5 548V560M477.5 550V563M478.5 547V563M479.5 549V560M480.5 552V563M481.5 549V564M482.5 552V563M483.5 552V562M484.5 552V561M485.5 552V561M486.5 551V561M487.5 552V564M488.5 552V561M489.5 550V564M490.5 552V561M491.5 551V563M492.5 552V561M493.5 550V561M494.5 549V561M495.5 551V564M496.5 552V564M497.5 552V561M498.5 551V561M499.5 551V562M500.5 549V561M501.5 551V563M502.5 551V561M503.5 550V561M504.5 550V561M505.5 552V561M506.5 552V564M507.5 552V563M508.5 549V561M509.5 551V561M510.5 550V560M511.5 550V560M512.5 550V561M513.5 548V563M514.5 549V558M515.5 549V558M516.5 549V558M517.5 548V558M518.5 547V561M519.5 545V559M520.5 547V557M521.5 547V559M522.5 547V559M523.5 547V557M524.5 543V555M525.5 545V555M526.5 546V556M527.5 546V558M528.5 546V556M529.5 544V555M530.5 546V558M531.5 545V555M532.5 546V555M533.5 544V556M534.5 546V557M535.5 546V558M536.5 546V555M537.5 546V555M538.5 546V558M539.5 546V555M540.5 546V555M541.5 546V555M542.5 546V556M543.5 544V555M544.5 546V555M545.5 543V558M546.5 543V555M547.5 544V555M548.5 546V557M549.5 546V555M550.5 543V555M551.5 544V555M552.5 543V555M553.5 545V555M554.5 546V556M555.5 543V555M556.5 545V555M557.5 546V556M558.5 546V555M559.5 545V555M560.5 543V557M561.5 546V555M562.5 546V558M563.5 546V555M564.5 544V556M565.5 543V555M566.5 547V560M567.5 547V557M568.5 546V557M569.5 545V559M570.5 544V559M571.5 548V559M572.5 549V559M573.5 546V560M574.5 549V558M575.5 549V558M576.5 548V561M577.5 549V563M578.5 550V560M579.5 547V560M580.5 549V562M581.5 552V562M582.5 549V562M583.5 552V562M584.5 552V561M585.5 551V562M586.5 552V561M587.5 550V563M588.5 551V564M589.5 550V561M590.5 552V563M591.5 551V563M592.5 552V561M593.5 550V561M594.5 552V561M595.5 552V561M596.5 551V563M597.5 551V562M598.5 550V563M599.5 552V564M600.5 551V564M601.5 552V561M602.5 552V561M603.5 552V561M604.5 552V561M605.5 552V562M606.5 549V561M607.5 549V561M608.5 552V563M609.5 552V561M610.5 550V560M611.5 547V563M612.5 548V560M613.5 550V560M614.5 548V561M615.5 549V558M616.5 547V558M617.5 549V558M618.5 549V560M619.5 547V557M620.5 547V558M621.5 544V557M622.5 547V560M623.5 547V559M624.5 546V555M625.5 545V556M626.5 546V555M627.5 546V555M628.5 544V558M629.5 546V557M630.5 544V556M631.5 546V556M632.5 546V555M633.5 546V556M634.5 546V557M635.5 546V555M636.5 543V555M637.5 543V555M638.5 546V555M639.5 546V556M640.5 546V557M641.5 546V555M642.5 546V558M643.5 545V555M644.5 543V555M645.5 546V555M646.5 546V557M647.5 546V556M648.5 546V555M649.5 543V558M650.5 546V555M651.5 546V556M652.5 545V555M653.5 544V555M654.5 546V557M655.5 545V555M656.5 543V555M657.5 544V555M658.5 546V556M659.5 544V556M660.5 546V557M661.5 546V555M662.5 546V555M663.5 543V555M664.5 543V555M665.5 546V557M666.5 547V557M667.5 547V559M668.5 545V557M669.5 544V559M670.5 546V557M671.5 549V560M672.5 549V561M673.5 549V559M674.5 549V558M675.5 549V558M676.5 550V562M677.5 550V560M678.5 550V560M679.5 550V560M680.5 552V561M681.5 552V561M682.5 549V561M683.5 552V561M684.5 552V563M685.5 549V564M686.5 550V561M687.5 552V561M688.5 549V564M689.5 552V561M690.5 552V561M691.5 549V564M692.5 552V564M693.5 549V564M694.5 549V561M695.5 551V562M696.5 551V561M697.5 552V561M698.5 552V561M699.5 550V561M700.5 552V562M701.5 551V561M702.5 550V561M703.5 549V561M704.5 551V563M705.5 552V561M706.5 552V564M707.5 552V562M708.5 552V561M709.5 549V561M710.5 550V563M711.5 550V562M712.5 550V563M713.5 550V561M714.5 548V561M715.5 548V560M716.5 549V559M717.5 548V558M718.5 548V561M719.5 546V557M720.5 544V557M721.5 547V559M722.5 545V557M723.5 547V557M724.5 543V557M725.5 546V558M726.5 545V556M727.5 544V555M728.5 544V558M729.5 546V557M730.5 546V555M731.5 543V556M732.5 546V556M733.5 546V555M734.5 546V555M735.5 546V558M736.5 546V556M737.5 546V558M738.5 544V555M739.5 546V558M740.5 546V555M741.5 545V555M742.5 546V556M743.5 544V558M744.5 546V556M745.5 546V555M746.5 546V558M747.5 543V555M748.5 546V556M749.5 546V555M750.5 544V555M751.5 543V555M752.5 546V555M753.5 546V555M754.5 546V555M755.5 544V556M756.5 545V555M757.5 546V555M758.5 546V556M759.5 543V558M760.5 546V558M761.5 546V556M762.5 546V558M763.5 546V555M764.5 545V555M765.5 546V555M766.5 547V557M767.5 547V557M768.5 547V559M769.5 546V557M770.5 545V559M771.5 547V561M772.5 549V558M773.5 547V558M774.5 549V559M775.5 549V558M776.5 549V560M777.5 550V561M778.5 550V560M779.5 548V562M780.5 552V561M781.5 552V563M782.5 552V562M783.5 549V561M784.5 552V564M785.5 552V561M786.5 552V564M787.5 550V561M788.5 552V562M789.5 552V561M790.5 552V564M791.5 552V564M792.5 550V561M793.5 552V561M794.5 552V564M795.5 552V561M796.5 550V563M797.5 552V562M798.5 549V561M799.5 552V562M800.5 549V561M801.5 552V561M802.5 552V561M803.5 552V561M804.5 552V561M805.5 552V562M806.5 552V564M807.5 552V561M808.5 549V561M809.5 550V561M810.5 548V560M811.5 550V562M812.5 550V560M813.5 550V562M814.5 549V558M815.5 548V558M816.5 549V559M817.5 547V559M818.5 548V558M819.5 546V557M820.5 546V557M821.5 545V557M822.5 544V557M823.5 545V560M824.5 544V558M825.5 546V557M826.5 546V557M827.5 546V556M828.5 545V556M829.5 543V555M830.5 543V558M831.5 545V556M832.5 546V555M833.5 546V557M834.5 546V555M835.5 544V557M836.5 546V555M837.5 546V555M838.5 546V555M839.5 546V555M840.5 544V557M841.5 546V557M842.5 546V556M843.5 545V558M844.5 544V556M845.5 546V557M846.5 546V555M847.5 546V555M848.5 546V557M849.5 546V556M850.5 546V558M851.5 546V555M852.5 546V555M853.5 544V555M854.5 546V557M855.5 545V556M856.5 544V555M857.5 545V555M858.5 546V557M859.5 544V555M860.5 546V555M861.5 544V557M862.5 544V555M863.5 543V558M864.5 544V555M865.5 545V555M866.5 544V559M867.5 544V557M868.5 547V559M869.5 547V557M870.5 547V557M871.5 549V560M872.5 547V558M873.5 547V561M874.5 546V559M875.5 549V558M876.5 547V560M877.5 550V561M878.5 550V563M879.5 550V560M880.5 552V561M881.5 551V561M882.5 552V564M883.5 550V561M884.5 552V561M885.5 552V561M886.5 550V561M887.5 549V564M888.5 552V562M889.5 551V563M890.5 552V562M891.5 552V561M892.5 552V561M893.5 552V561M894.5 549V564M895.5 551V561M896.5 550V561M897.5 551V562M898.5 552V564M899.5 552V562M900.5 552V563M901.5 552V561M902.5 551V561M903.5 550V561M904.5 552V561M905.5 550V561M906.5 550V563M907.5 549V561M908.5 552V562M909.5 549V564M910.5 548V560M911.5 549V560M912.5 550V563M913.5 550V561M914.5 549V560M915.5 548V558M916.5 547V559M917.5 548V558M918.5 548V559M919.5 547V557M920.5 547V558M921.5 544V557M922.5 545V557M923.5 547V557M924.5 546V555M925.5 546V556M926.5 546V555M927.5 546V555M928.5 544V555M929.5 545V555M930.5 546V555M931.5 543V556M932.5 546V557M933.5 546V557M934.5 546V557M935.5 543V558M936.5 546V555M937.5 545V558M938.5 546V555M939.5 545V555M940.5 546V555M941.5 546V555M942.5 544V555M943.5 544V557M944.5 545V555M945.5 546V555M946.5 546V555M947.5 545V555M948.5 544V555M949.5 544V555M950.5 543V555M951.5 546V558M952.5 544V555M953.5 546V555M954.5 546V555M955.5 545V557M956.5 545V555M957.5 546V555M958.5 545V556M959.5 546V555M960.5 546V557M961.5 546V555M962.5 544V555M963.5 545V555M964.5 546V555M965.5 546V555M966.5 547V557M967.5 547V560M968.5 547V557M969.5 547V557M970.5 547V557M971.5 546V558M972.5 546V558M973.5 549V559M974.5 549V560M975.5 549V561M976.5 549V563M977.5 549V560M978.5 550V563M979.5 548V560M980.5 552V564M981.5 551V561M982.5 552V561M983.5 552V564M984.5 550V564M985.5 552V563M986.5 551V561M987.5 551V561M988.5 550V562M989.5 549V564M990.5 549V563M991.5 552V562M992.5 550V563M993.5 552V563M994.5 552V563M995.5 552V561M996.5 550V561M997.5 551V563M998.5 552V561M999.5 549V564M1000.5 552V562M1001.5 552V564M1002.5 552V561M1003.5 550V564M1004.5 549V561M1005.5 551V563M1006.5 551V561M1007.5 551V562M1008.5 551V564M1009.5 552V562M1010.5 550V560M1011.5 550V562M1012.5 549V561M1013.5 549V560M1014.5 549V560M1015.5 547V561M1016.5 546V558M97.5 512V568M46.5 543V568M197.5 512V568M146.5 543V568M297.5 512V568M246.5 543V568M397.5 512V568M346.5 543V568M497.5 512V568M446.5 543V568M597.5 512V568M546.5 543V568M697.5 512V568M646.5 543V568M797.5 512V568M746.5 543V568M897.5 512V568M846.5 543V568M997.5 512V568M946.5 543V568" stroke="#00f400" stroke-width="1" fill="none"/>
<path d="M17 515.5H1017" stroke="#f4a000" stroke-width="1" stroke-dasharray="7 1" stroke-dashoffset="3"/>
<path d="M487.5 4H498L492.7 14Z" fill="#ffa500" shape-rendering="auto"/>
<path d="M996.5 266L1005 261V271Z" fill="#00e000"/><path d="M1003 266.5H1019" stroke="#00e000"/>
<g shape-rendering="auto"><path d="M19.2 153.4H24.2" stroke="#f2f200" stroke-width="2"/><path d="M23.2 149.20000000000002L31.2 153.4L23.2 157.6Z" fill="#f2f200"/><circle cx="11.2" cy="153.4" r="8.5" fill="#f2f200" stroke="#b4b4b4" stroke-width="1.8"/><path d="M8.6 151.20000000000002L12.1 148.6V158.1" stroke="#000" stroke-width="1.7" fill="none"/></g>
<g shape-rendering="auto"><path d="M19.2 250.4H24.2" stroke="#f000f0" stroke-width="2"/><path d="M23.2 246.20000000000002L31.2 250.4L23.2 254.6Z" fill="#f000f0"/><circle cx="11.2" cy="250.4" r="8.5" fill="#f000f0" stroke="#b4b4b4" stroke-width="1.8"/><text x="11.5" y="255.0" style="font-family:'Liberation Sans';font-size:13px" text-anchor="middle" fill="#000">3</text></g>
<g shape-rendering="auto"><path d="M19.2 415.4H24.2" stroke="#00f4f4" stroke-width="2"/><path d="M23.2 411.2L31.2 415.4L23.2 419.59999999999997Z" fill="#00f4f4"/><circle cx="11.2" cy="415.4" r="8.5" fill="#00f4f4" stroke="#ffa000" stroke-width="1.8"/><text x="11.5" y="420.0" style="font-family:'Liberation Sans';font-size:13px" text-anchor="middle" fill="#000">2</text></g>
<g shape-rendering="auto"><path d="M19.2 558.4H24.2" stroke="#00f000" stroke-width="2"/><path d="M23.2 554.1999999999999L31.2 558.4L23.2 562.6Z" fill="#00f000"/><circle cx="11.2" cy="558.4" r="8.5" fill="#00f000" stroke="#b4b4b4" stroke-width="1.8"/><text x="11.5" y="563.0" style="font-family:'Liberation Sans';font-size:13px" text-anchor="middle" fill="#000">4</text></g>
</svg>
<div class="lbl" style="left:37px;top:49px;color:#f0f000;font-size:13.5px;">IN1</div>
<div class="lbl" style="left:40px;top:182px;color:#f000f0">OUT1</div>
<div class="lbl" style="left:28px;top:352px;color:#00f0f0;transform:scaleX(0.79)">VIPROPI</div>
<div class="lbl" style="left:26px;top:520px;color:#00ec00;transform:scaleX(0.78)">I_MOTOR</div>
<div class="panel" style="left:22px;top:642px;width:281px;height:92px"></div>
<div class="panel" style="left:307px;top:642px;width:206px;height:92px"></div>
<div class="panel" style="left:592px;top:642px;width:187px;height:37px"></div>
<div class="panel" style="left:783px;top:642px;width:230px;height:92px"></div>
<div class="pill" style="left:31px;top:649px;background:linear-gradient(#f4f400,#c4c400)">C1</div>
<div class="pill" style="left:316px;top:649px;background:linear-gradient(#f4f400,#c4c400)">C1</div>
<div class="pill" style="left:31px;top:670px;background:linear-gradient(#20f4f4,#00b4bc)">C2</div>
<div class="pill" style="left:316px;top:670px;background:linear-gradient(#20f4f4,#00b4bc)">C2</div>
<div class="pill" style="left:31px;top:691px;background:linear-gradient(#f020f0,#b400bc)">C3</div>
<div class="pill" style="left:316px;top:691px;background:linear-gradient(#f020f0,#b400bc)">C3</div>
<div class="pill" style="left:31px;top:712px;background:linear-gradient(#10f010,#00b000)">C4</div>
<div class="pill" style="left:316px;top:712px;background:linear-gradient(#10f010,#00b000)">C4</div>
<div class="t" style="left:68.3px;top:649px;letter-spacing:0.33px;-webkit-text-stroke:0.3px currentColor;">6.0V/div</div>
<div class="t" style="left:182.7px;top:649px;letter-spacing:0.7px;-webkit-text-stroke:0.3px currentColor;">1MΩ</div>
<div class="bw" style="left:214px;top:648px"><span class="bb">B</span><span class="bwl">W</span><span class="bv">:20.0M</span></div>
<div class="t" style="left:68.3px;top:670px;letter-spacing:0.33px;-webkit-text-stroke:0.3px currentColor;">600.0mV/div</div>
<div class="t" style="left:182.7px;top:670px;letter-spacing:0.7px;-webkit-text-stroke:0.3px currentColor;">1MΩ</div>
<div class="bw" style="left:214px;top:669px"><span class="bb">B</span><span class="bwl">W</span><span class="bv">:500M</span></div>
<div class="t" style="left:68.3px;top:691px;letter-spacing:0.33px;-webkit-text-stroke:0.3px currentColor;">5.0V/div</div>
<div class="t" style="left:182.7px;top:691px;letter-spacing:0.7px;-webkit-text-stroke:0.3px currentColor;">1MΩ</div>
<div class="bw" style="left:214px;top:690px"><span class="bb">B</span><span class="bwl">W</span><span class="bv">:500M</span></div>
<div class="t" style="left:68.3px;top:712px;letter-spacing:0.33px;-webkit-text-stroke:0.3px currentColor;">100.0mA/div</div>
<div class="t" style="left:182.7px;top:712px;letter-spacing:0.7px;-webkit-text-stroke:0.3px currentColor;">1MΩ</div>
<div class="bw" style="left:214px;top:711px"><span class="bb">B</span><span class="bwl">W</span><span class="bv">:20.0M</span></div>
<div class="t" style="left:352.4px;top:650px;font-weight:bold;letter-spacing:0.3px;">High</div>
<div class="t" style="left:413.0px;top:650px;font-weight:bold;letter-spacing:0.3px;">6.84V</div>
<div class="t" style="left:352.4px;top:671px;font-weight:bold;letter-spacing:0.3px;">High</div>
<div class="t" style="left:413.0px;top:671px;font-weight:bold;letter-spacing:0.3px;">-12.0mV</div>
<div class="t" style="left:352.4px;top:692px;font-weight:bold;letter-spacing:0.3px;">High</div>
<div class="t" style="left:413.0px;top:692px;font-weight:bold;letter-spacing:0.3px;">1.5V</div>
<div class="t" style="left:352.4px;top:713px;font-weight:bold;letter-spacing:0.3px;">High*</div>
<div class="t" style="left:413.0px;top:713px;font-weight:bold;letter-spacing:0.3px;">68.0mA</div>
<svg style="left:486px;top:713px" width="15" height="15" viewBox="0 0 15 15"><circle cx="7.6" cy="7.2" r="5.3" fill="#62a8ee" stroke="#f0f0f0" stroke-width="1.3"/><text x="7.6" y="11.2" font-family="Liberation Sans" font-weight="bold" font-size="10" text-anchor="middle" fill="#e81010">?</text></svg>
<div style="position:absolute;left:598px;top:648px;width:15px;height:15px;background:#cfcfcf;color:#000;font-size:12px;line-height:16px;text-align:center">A</div>
<div class="pill" style="left:616px;top:649px;background:linear-gradient(#10f010,#00b000)">C4</div>
<svg style="left:650px;top:647px" width="18" height="17" viewBox="0 0 18 17"><path d="M2 14.5H5.5L12 3H15.5" stroke="#f0f0f0" stroke-width="1.6" fill="none"/></svg>
<div class="t" style="left:668.4px;top:649px;font-weight:bold;letter-spacing:0.18px;">464.0mA</div>
<div class="t" style="left:599.5px;top:666px;font-weight:bold;letter-spacing:0.43px;">None</div>
<div class="t" style="left:730.0px;top:666px;font-weight:bold;letter-spacing:0.33px;">Auto</div>
<div class="t" style="left:790.8px;top:649px;letter-spacing:0.36px;-webkit-text-stroke:0.3px currentColor;">50.0µs/div</div>
<div class="t" style="left:855.6px;top:649px;letter-spacing:0.3px;-webkit-text-stroke:0.3px currentColor;">200MS/s</div>
<div class="t" style="left:940.5px;top:649px;letter-spacing:0.49px;-webkit-text-stroke:0.3px currentColor;">5.0ns/pt</div>
<div class="t" style="left:790.5px;top:670px;font-weight:bold;letter-spacing:0.07px;color:#ff1414;">Stopped</div>
<svg style="left:990px;top:668px" width="12" height="22" viewBox="0 0 12 22"><rect x="4" y="2" width="3.6" height="13" fill="#f0f000"/><circle cx="5.8" cy="15.5" r="3.8" fill="#f0f000"/></svg>
<div class="t" style="left:790.5px;top:691px;letter-spacing:0.43px;-webkit-text-stroke:0.3px currentColor;">55 acqs</div>
<div class="t" style="left:930.0px;top:691px;letter-spacing:0.34px;-webkit-text-stroke:0.3px currentColor;">RL:100.0k</div>
<div class="t" style="left:790.5px;top:712px;letter-spacing:0.8px;-webkit-text-stroke:0.3px currentColor;">Auto</div>
<div class="t" style="left:831.7px;top:712px;letter-spacing:0.42px;-webkit-text-stroke:0.3px currentColor;">December 29, 2022</div>
<div class="t" style="left:956.8px;top:712px;letter-spacing:0.39px;color:#ff9c00;-webkit-text-stroke:0.3px currentColor;">15:43:33</div>
</body></html>
